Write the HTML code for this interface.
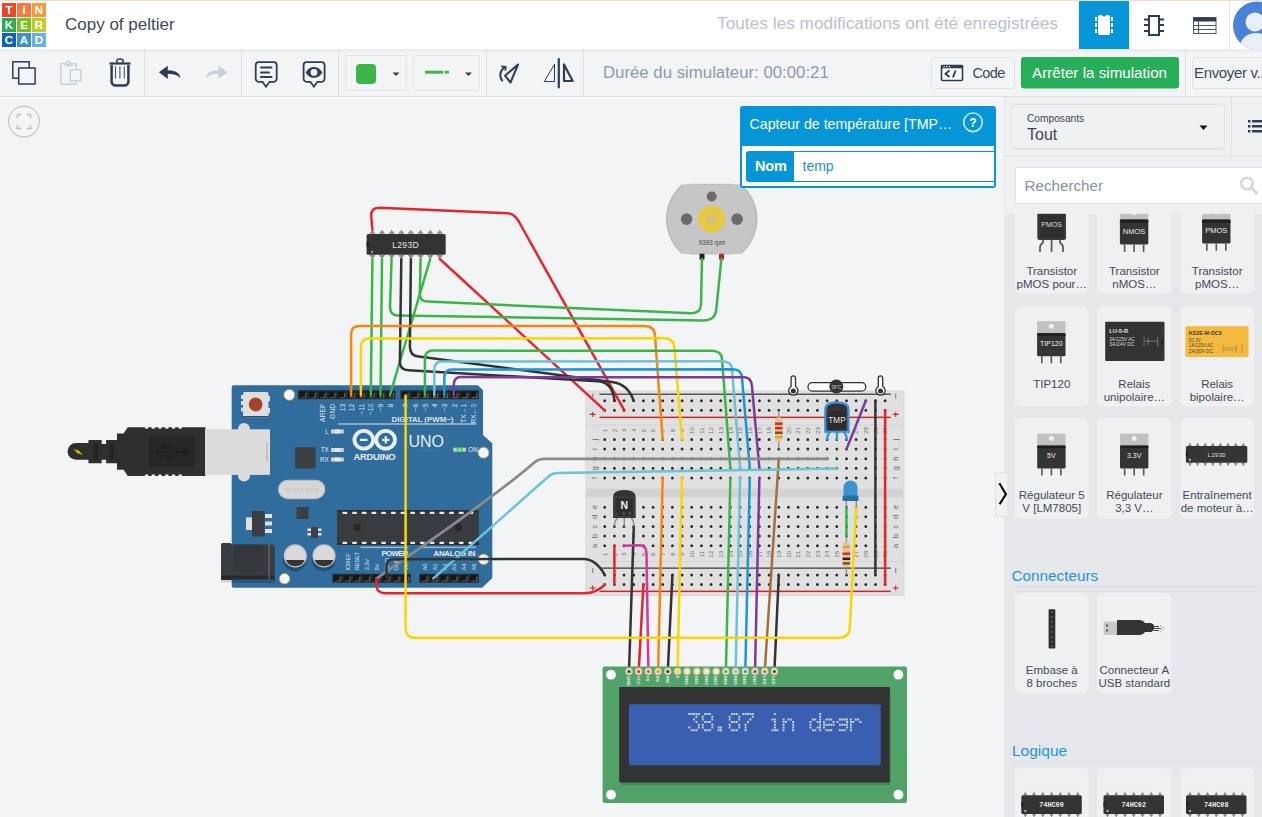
<!DOCTYPE html>
<html><head><meta charset="utf-8">
<style>
*{box-sizing:border-box;margin:0;padding:0}
html,body{width:1262px;height:817px;overflow:hidden;background:#f3f4f6;font-family:"Liberation Sans",sans-serif;position:relative}
.abs{position:absolute}
#hdr{left:0;top:0;width:1262px;height:49px;background:#fff;border-top:1px solid #f3dccd}
#tb{left:0;top:49px;width:1262px;height:48px;background:#f3f4f6;border-bottom:1px solid #dde1e6}
.sep{position:absolute;top:49px;width:1px;height:47px;background:#dde1e6}
.t{position:absolute;white-space:nowrap;line-height:1}
#side{left:1004px;top:97px;width:258px;height:720px;background:#e6e7ea}
.card{position:absolute;width:74px;height:81px;background:#f1f1f3;border-radius:6px}
.cl{position:absolute;left:0;width:74px;text-align:center;font-size:11.5px;line-height:13px;color:#434a56}
</style></head>
<body>
<!-- HEADER -->
<div id="hdr" class="abs"></div>
<svg class="abs" style="left:0;top:0" width="1262" height="97">
  <g font-family="Liberation Sans" font-weight="bold" font-size="11.5" fill="#fff" text-anchor="middle">
    <rect x="2" y="3" width="14" height="14" fill="#e8472a"/><text x="9" y="14.3">T</text>
    <rect x="17" y="3" width="14" height="14" fill="#f47b3d"/><text x="24" y="14.3">I</text>
    <rect x="32" y="3" width="14" height="14" fill="#f89a3c"/><text x="39" y="14.3">N</text>
    <rect x="2" y="18" width="14" height="14" fill="#2eaa55"/><text x="9" y="29.3">K</text>
    <rect x="17" y="18" width="14" height="14" fill="#7dc11f"/><text x="24" y="29.3">E</text>
    <rect x="32" y="18" width="14" height="14" fill="#c1cc2a"/><text x="39" y="29.3">R</text>
    <rect x="2" y="33" width="14" height="14" fill="#1065b3"/><text x="9" y="44.3">C</text>
    <rect x="17" y="33" width="14" height="14" fill="#3f8fca"/><text x="24" y="44.3">A</text>
    <rect x="32" y="33" width="14" height="14" fill="#67b2dd"/><text x="39" y="44.3">D</text>
  </g>
  <!-- active tab -->
  <rect x="1079" y="1" width="50" height="48" fill="#0696d7"/>
  <g fill="#fff">
    <rect x="1098" y="15" width="12" height="20" rx="1.5"/>
    <rect x="1095" y="17" width="2" height="4"/><rect x="1095" y="23" width="2" height="4"/><rect x="1095" y="29" width="2" height="4"/>
    <rect x="1111" y="17" width="2" height="4"/><rect x="1111" y="23" width="2" height="4"/><rect x="1111" y="29" width="2" height="4"/>
  </g>
  <path d="M1102 15 h4 a2 1.6 0 0 1 -4 0z" fill="#0696d7"/>
  <!-- schematic chip icon -->
  <g stroke="#2c3e55" fill="none" stroke-width="2">
    <rect x="1149" y="16" width="10" height="19"/>
    <path d="M1144 19.5h5M1144 25h5M1144 31h5M1159 19.5h5M1159 25h5M1159 31h5"/>
  </g>
  <!-- table icon -->
  <g>
    <rect x="1193.5" y="17.5" width="22.5" height="16" fill="#fff" stroke="#4b5a6c" stroke-width="1"/>
    <rect x="1193.5" y="17.5" width="22.5" height="4" fill="#2c3e55"/>
    <path d="M1194 25.5h22M1194 29.5h22M1198.5 21v12" stroke="#4b5a6c" stroke-width="1.2"/>
  </g>
  <rect x="1229" y="1" width="1" height="48" fill="#e3e6ea"/>
  <!-- avatar -->
  <clipPath id="avc"><circle cx="1257" cy="25.5" r="24"/></clipPath>
  <circle cx="1257" cy="25.5" r="24" fill="#4a82d6"/>
  <g clip-path="url(#avc)" fill="#e8eefa">
    <circle cx="1255" cy="22" r="9.5"/>
    <ellipse cx="1256" cy="47" rx="16" ry="14"/>
  </g>
</svg>
<div class="t" style="left:65px;top:16px;font-size:17px;color:#3c4a5c">Copy of peltier</div>
<div class="t" style="left:717px;top:15px;font-size:17.3px;color:#b7c2cf">Toutes les modifications ont été enregistrées</div>

<!-- TOOLBAR -->
<div id="tb" class="abs"></div>
<div class="abs" style="left:0;top:49px;width:1262px;height:4px;background:linear-gradient(#e8eaed,#f3f4f6)"></div>
<div class="abs" style="left:0;top:97px;width:1004px;height:2px;background:#fafafa"></div>
<div class="sep" style="left:144px"></div>
<div class="sep" style="left:241px"></div>
<div class="sep" style="left:338px"></div>
<div class="sep" style="left:486px"></div>
<div class="sep" style="left:583px"></div>
<div class="sep" style="left:1185px"></div>


<svg class="abs" style="left:0;top:49px" width="1262" height="48" viewBox="0 49 1262 48">
  <g fill="none" stroke="#2c3e55" stroke-width="1.5">
    <rect x="12.8" y="61.8" width="16.4" height="16.4"/>
    <rect x="18.7" y="68" width="16.4" height="16" fill="#f3f4f6"/>
  </g>
  <g fill="none" stroke="#c6d0da" stroke-width="1.4">
    <rect x="60.8" y="63.8" width="15.4" height="20.4"/>
    <path d="M64.5 65.5h8" stroke-width="1.8"/>
    <circle cx="68.4" cy="63" r="1.8" fill="#f3f4f6"/>
    <rect x="70.3" y="69.7" width="10.6" height="11.2" fill="#f3f4f6"/>
  </g>
  <g fill="none" stroke="#2c3e55">
    <path d="M109.5 63.5h21" stroke-width="2.2"/>
    <path d="M117 62.5v-1.5a2 2 0 0 1 2-2h2a2 2 0 0 1 2 2v1.5" stroke-width="1.6"/>
    <path d="M111.6 65v16.5a4 4 0 0 0 4 4h8.8a4 4 0 0 0 4-4v-16.5" stroke-width="2.5"/>
    <path d="M115.5 66.5v12M119.9 66.5v12M124.3 66.5v12" stroke-width="1.1" stroke="#44556b"/>
  </g>
  <path d="M158.9 72.3L167.8 65.8V70.3C173 70.4 177 71.5 179.2 74.5 180 76 180.2 77 180 78.2 178.5 75.5 175.5 74 167.8 73.9V78.9Z" fill="#2c3e55"/>
  <path d="M227.4 72.3L218.5 65.8V70.3C213.3 70.4 209.3 71.5 207.1 74.5 206.3 76 206.1 77 206.3 78.2 207.8 75.5 210.8 74 218.5 73.9V78.9Z" fill="#c5cfda"/>
  <g fill="none" stroke="#2c3e55" stroke-width="1.8">
    <path d="M258.7 62.2h15a3 3 0 0 1 3 3v13.6a3 3 0 0 1 -3 3h-4.2l-3.5 5-3.5-5h-3.8a3 3 0 0 1 -3-3v-13.6a3 3 0 0 1 3-3z"/>
    <path d="M261 67.5h10.5M261 72.4h8M261 77.1h10.5" stroke-width="2" stroke-linecap="round"/>
    <path d="M306.6 62.2h15a3 3 0 0 1 3 3v13.6a3 3 0 0 1 -3 3h-4.2l-3.5 5-3.5-5h-3.8a3 3 0 0 1 -3-3v-13.6a3 3 0 0 1 3-3z"/>
  </g>
  <path d="M305.6 72.4C308.5 68 311.5 67 314 67S319.5 68 322.4 72.4C319.5 76.8 316.5 77.8 314 77.8S308.5 76.8 305.6 72.4Z" fill="#2c3e55"/>
  <circle cx="314" cy="72.4" r="3.4" fill="#f3f4f6"/>
  <!-- color picker -->
  <rect x="345.5" y="55.5" width="61" height="35" rx="3" fill="#f3f4f6" stroke="#dfe3e8"/>
  <rect x="356" y="64" width="20" height="20" rx="4" fill="#3cb648"/>
  <path d="M392.5 72.5h7l-3.5 3.5z" fill="#2c3e55"/>
  <rect x="413.5" y="55.5" width="66" height="35" rx="3" fill="#f3f4f6" stroke="#dfe3e8"/>
  <rect x="425" y="70.7" width="18" height="3" fill="#3cb648"/>
  <rect x="444.5" y="70.9" width="4.5" height="2.6" fill="#3cb648"/>
  <path d="M465 72.5h7l-3.5 3.5z" fill="#2c3e55"/>
  <!-- rotate -->
  <g fill="none" stroke="#2c3e55" stroke-width="2" stroke-linejoin="round">
    <path d="M518 64.5L505 75.7L510.5 82.5Z"/>
    <path d="M502.2 80.6C499.5 77.5 499 71.5 504.5 67.3" stroke-linecap="round"/>
    <path d="M501.2 66.4L505.7 66.8L505.3 70.6" stroke-width="1.8"/>
  </g>
  <!-- flip -->
  <path d="M558.8 59v28.5" stroke="#2c3e55" stroke-width="2.2" stroke-linecap="round"/>
  <path d="M554.5 64.2V81.5H544.3Z" fill="none" stroke="#2c3e55" stroke-width="1" stroke-linejoin="round"/>
  <path d="M564 64.5V81H572.7Z" fill="none" stroke="#2c3e55" stroke-width="2.2" stroke-linejoin="round"/>
  <!-- code button -->
  <rect x="931.5" y="57.5" width="83" height="31" rx="3" fill="#f3f4f6" stroke="#dde1e6"/>
  <rect x="941.5" y="65.5" width="21" height="15" rx="1" fill="#fff" stroke="#2c3e55" stroke-width="1.6"/>
  <rect x="941" y="65" width="22" height="3.3" fill="#2c3e55"/>
  <g fill="#fff"><rect x="943.5" y="66" width="1.2" height="1.2"/><rect x="946.2" y="66" width="1.2" height="1.2"/><rect x="948.9" y="66" width="1.2" height="1.2"/></g>
  <path d="M949.5 70.5l-4 3.3 4 3.3M955.7 70.5l-2.8 6.8" fill="none" stroke="#2c3e55" stroke-width="1.9"/>
  <rect x="1021" y="57" width="158" height="31.5" rx="3" fill="#27ae58"/>
  <rect x="1192.5" y="57.5" width="80" height="31" rx="3" fill="#f3f4f6" stroke="#dde1e6"/>
</svg>
<div class="t" style="left:603px;top:64.8px;font-size:16.8px;color:#8d9bad">Durée du simulateur: 00:00:21</div>
<div class="t" style="left:972.5px;top:66px;font-size:14.5px;letter-spacing:-0.6px;color:#3c4a5c">Code</div>
<div class="t" style="left:1032px;top:65px;font-size:15.2px;color:#fff">Arrêter la simulation</div>
<div class="t" style="left:1194px;top:65px;font-size:15px;letter-spacing:-0.35px;color:#3c4a5c">Envoyer v...</div>


<!--CANVAS_START-->
<svg class="abs" style="left:0;top:97px" width="1004" height="720" viewBox="0 97 1004 720">
<circle cx="24" cy="121.5" r="15.5" fill="none" stroke="#b5bcc5" stroke-width="1"/>
<path d="M17.5 118v-3.5h3.5M27 114.5h3.5v3.5M30.5 125v3.5h-3.5M21 128.5h-3.5v-3.5" fill="none" stroke="#b5bcc5" stroke-width="1.4"/>
<g>
<path d="M89 443.1H76a8.4 8.35 0 0 0 0 16.7H89z" fill="#2f2f2f"/>
<path d="M74.3 449.4L78.6 451.4L77.7 449.9L81.9 454.5L77.3 452.3L78.1 453.6Z" fill="#f5d000" stroke="#f5d000" stroke-width="0.5" stroke-linejoin="round"/>
<path d="M88.5 440H101.7V443.9H106.1V440H118V463.3H106.1V459.8H101.7V463.3H88.5Z" fill="#2f2f2f"/>
<ellipse cx="95.8" cy="451.6" rx="2.6" ry="8.8" fill="#242424"/>
<ellipse cx="111.7" cy="451.6" rx="2.6" ry="8.8" fill="#242424"/>
<path d="M117 433.5H123.6L127.8 427.2H205.5V476H127.8L123.6 469.8H117Z" fill="#2f2f2f"/>
<g fill="#f3f4f6">
<rect x="145.0" y="427" width="3.2" height="1.6"/><rect x="145.0" y="474.5" width="3.2" height="1.6"/>
<rect x="151.7" y="427" width="3.2" height="1.6"/><rect x="151.7" y="474.5" width="3.2" height="1.6"/>
<rect x="158.4" y="427" width="3.2" height="1.6"/><rect x="158.4" y="474.5" width="3.2" height="1.6"/>
<rect x="165.2" y="427" width="3.2" height="1.6"/><rect x="165.2" y="474.5" width="3.2" height="1.6"/>
<rect x="171.9" y="427" width="3.2" height="1.6"/><rect x="171.9" y="474.5" width="3.2" height="1.6"/>
<rect x="178.6" y="427" width="3.2" height="1.6"/><rect x="178.6" y="474.5" width="3.2" height="1.6"/>
</g>
<rect x="149" y="437" width="45.7" height="29.7" fill="#262626"/>
<g fill="#1e1e1e" stroke="#1e1e1e">
<path d="M156.5 451.8H185M175.5 451.8Q171 446 166 445.9M178.8 451.8Q174.5 457 169.5 457" stroke-width="0.9" fill="none"/>
<path d="M154.3 451.8l3.6-2v4z" stroke="none"/>
<circle cx="185.6" cy="451.8" r="2.8" stroke="none"/>
<rect x="161" y="443.9" width="4.7" height="3.9" stroke="none"/>
<circle cx="168.2" cy="457" r="1.9" stroke="none"/>
</g>
<rect x="205" y="429.3" width="65" height="45.6" fill="#dcdcdc"/>
<rect x="205" y="429.3" width="2" height="45.6" fill="#cfcfcf"/>
<rect x="266.5" y="442" width="0.8" height="19" fill="#999"/>
</g>
<path d="M233.7 385.2H478L483 390.3V435L492.3 443.6V578L482.2 587.7H233.7a2 2 0 0 1 -2 -2V387.2a2 2 0 0 1 2 -2z" fill="#306c9c"/>
<circle cx="244" cy="429" r="6" fill="#dcdcdc"/><circle cx="244" cy="475.5" r="6" fill="#dcdcdc"/>
<rect x="205" y="429.3" width="65" height="45.6" fill="#dcdcdc"/><rect x="266.5" y="442" width="0.8" height="19" fill="#999"/>
<rect x="241" y="395" width="3" height="4" fill="#dcdcdc"/><rect x="241" y="401" width="3" height="4" fill="#dcdcdc"/><rect x="241" y="407.5" width="3" height="4" fill="#dcdcdc"/>
<rect x="267" y="396" width="3" height="5" fill="#dcdcdc"/><rect x="267" y="408" width="3" height="5" fill="#dcdcdc"/>
<rect x="243" y="392" width="25.5" height="25.5" rx="1.5" fill="#dedede"/><rect x="243" y="416" width="25.5" height="1.5" fill="#234f74"/>
<circle cx="255.8" cy="405" r="6.7" fill="#234f74" opacity="0.5"/><circle cx="255.6" cy="404.3" r="6.7" fill="#a8432a"/>
<circle cx="289.3" cy="394.9" r="5.6" fill="#f3f4f6" stroke="#9a8a4e" stroke-width="0.9"/>
<circle cx="483.5" cy="452.7" r="5.6" fill="#f3f4f6" stroke="#9a8a4e" stroke-width="0.9"/>
<circle cx="284.5" cy="578.7" r="5.4" fill="#f3f4f6" stroke="#9a8a4e" stroke-width="0.9"/>
<circle cx="483.6" cy="559.3" r="5.4" fill="#f3f4f6" stroke="#9a8a4e" stroke-width="0.9"/>
<rect x="298" y="390.2" width="97.4" height="9" fill="#2b2b2b"/><rect x="299.3" y="391.5" width="7.1" height="6.4" fill="#161616"/><path d="M299.8 397.8h6.5v-5.6l-1.3 1.3v3.4000000000000004h-3.5z" fill="#5e5e5e"/><rect x="309.0" y="391.5" width="7.1" height="6.4" fill="#161616"/><path d="M309.5 397.8h6.5v-5.6l-1.3 1.3v3.4000000000000004h-3.5z" fill="#5e5e5e"/><rect x="318.8" y="391.5" width="7.1" height="6.4" fill="#161616"/><path d="M319.3 397.8h6.5v-5.6l-1.3 1.3v3.4000000000000004h-3.5z" fill="#5e5e5e"/><rect x="328.5" y="391.5" width="7.1" height="6.4" fill="#161616"/><path d="M329.0 397.8h6.5v-5.6l-1.3 1.3v3.4000000000000004h-3.5z" fill="#5e5e5e"/><rect x="338.3" y="391.5" width="7.1" height="6.4" fill="#161616"/><path d="M338.8 397.8h6.5v-5.6l-1.3 1.3v3.4000000000000004h-3.5z" fill="#5e5e5e"/><rect x="348.0" y="391.5" width="7.1" height="6.4" fill="#161616"/><path d="M348.5 397.8h6.5v-5.6l-1.3 1.3v3.4000000000000004h-3.5z" fill="#5e5e5e"/><rect x="357.7" y="391.5" width="7.1" height="6.4" fill="#161616"/><path d="M358.2 397.8h6.5v-5.6l-1.3 1.3v3.4000000000000004h-3.5z" fill="#5e5e5e"/><rect x="367.5" y="391.5" width="7.1" height="6.4" fill="#161616"/><path d="M368.0 397.8h6.5v-5.6l-1.3 1.3v3.4000000000000004h-3.5z" fill="#5e5e5e"/><rect x="377.2" y="391.5" width="7.1" height="6.4" fill="#161616"/><path d="M377.7 397.8h6.5v-5.6l-1.3 1.3v3.4000000000000004h-3.5z" fill="#5e5e5e"/><rect x="387.0" y="391.5" width="7.1" height="6.4" fill="#161616"/><path d="M387.5 397.8h6.5v-5.6l-1.3 1.3v3.4000000000000004h-3.5z" fill="#5e5e5e"/>
<rect x="400.4" y="390.3" width="78.5" height="9" fill="#2b2b2b"/><rect x="401.7" y="391.6" width="7.2" height="6.4" fill="#161616"/><path d="M402.2 397.90000000000003h6.6v-5.6l-1.3 1.3v3.4000000000000004h-3.6z" fill="#5e5e5e"/><rect x="411.5" y="391.6" width="7.2" height="6.4" fill="#161616"/><path d="M412.0 397.90000000000003h6.6v-5.6l-1.3 1.3v3.4000000000000004h-3.6z" fill="#5e5e5e"/><rect x="421.3" y="391.6" width="7.2" height="6.4" fill="#161616"/><path d="M421.8 397.90000000000003h6.6v-5.6l-1.3 1.3v3.4000000000000004h-3.6z" fill="#5e5e5e"/><rect x="431.1" y="391.6" width="7.2" height="6.4" fill="#161616"/><path d="M431.6 397.90000000000003h6.6v-5.6l-1.3 1.3v3.4000000000000004h-3.6z" fill="#5e5e5e"/><rect x="440.9" y="391.6" width="7.2" height="6.4" fill="#161616"/><path d="M441.4 397.90000000000003h6.6v-5.6l-1.3 1.3v3.4000000000000004h-3.6z" fill="#5e5e5e"/><rect x="450.8" y="391.6" width="7.2" height="6.4" fill="#161616"/><path d="M451.2 397.90000000000003h6.6v-5.6l-1.3 1.3v3.4000000000000004h-3.6z" fill="#5e5e5e"/><rect x="460.6" y="391.6" width="7.2" height="6.4" fill="#161616"/><path d="M461.1 397.90000000000003h6.6v-5.6l-1.3 1.3v3.4000000000000004h-3.6z" fill="#5e5e5e"/><rect x="470.4" y="391.6" width="7.2" height="6.4" fill="#161616"/><path d="M470.9 397.90000000000003h6.6v-5.6l-1.3 1.3v3.4000000000000004h-3.6z" fill="#5e5e5e"/>
<rect x="332.4" y="573.8" width="78.4" height="9" fill="#2b2b2b"/><rect x="333.7" y="575.0999999999999" width="7.2" height="6.4" fill="#161616"/><path d="M334.2 581.4h6.6v-5.6l-1.3 1.3v3.4000000000000004h-3.6z" fill="#5e5e5e"/><rect x="343.5" y="575.0999999999999" width="7.2" height="6.4" fill="#161616"/><path d="M344.0 581.4h6.6v-5.6l-1.3 1.3v3.4000000000000004h-3.6z" fill="#5e5e5e"/><rect x="353.3" y="575.0999999999999" width="7.2" height="6.4" fill="#161616"/><path d="M353.8 581.4h6.6v-5.6l-1.3 1.3v3.4000000000000004h-3.6z" fill="#5e5e5e"/><rect x="363.1" y="575.0999999999999" width="7.2" height="6.4" fill="#161616"/><path d="M363.6 581.4h6.6v-5.6l-1.3 1.3v3.4000000000000004h-3.6z" fill="#5e5e5e"/><rect x="372.9" y="575.0999999999999" width="7.2" height="6.4" fill="#161616"/><path d="M373.4 581.4h6.6v-5.6l-1.3 1.3v3.4000000000000004h-3.6z" fill="#5e5e5e"/><rect x="382.7" y="575.0999999999999" width="7.2" height="6.4" fill="#161616"/><path d="M383.2 581.4h6.6v-5.6l-1.3 1.3v3.4000000000000004h-3.6z" fill="#5e5e5e"/><rect x="392.5" y="575.0999999999999" width="7.2" height="6.4" fill="#161616"/><path d="M393.0 581.4h6.6v-5.6l-1.3 1.3v3.4000000000000004h-3.6z" fill="#5e5e5e"/><rect x="402.3" y="575.0999999999999" width="7.2" height="6.4" fill="#161616"/><path d="M402.8 581.4h6.6v-5.6l-1.3 1.3v3.4000000000000004h-3.6z" fill="#5e5e5e"/>
<rect x="419.3" y="573.8" width="59.5" height="9" fill="#2b2b2b"/><rect x="420.6" y="575.0999999999999" width="7.3" height="6.4" fill="#161616"/><path d="M421.1 581.4h6.7v-5.6l-1.3 1.3v3.4000000000000004h-3.7z" fill="#5e5e5e"/><rect x="430.5" y="575.0999999999999" width="7.3" height="6.4" fill="#161616"/><path d="M431.0 581.4h6.7v-5.6l-1.3 1.3v3.4000000000000004h-3.7z" fill="#5e5e5e"/><rect x="440.4" y="575.0999999999999" width="7.3" height="6.4" fill="#161616"/><path d="M440.9 581.4h6.7v-5.6l-1.3 1.3v3.4000000000000004h-3.7z" fill="#5e5e5e"/><rect x="450.4" y="575.0999999999999" width="7.3" height="6.4" fill="#161616"/><path d="M450.9 581.4h6.7v-5.6l-1.3 1.3v3.4000000000000004h-3.7z" fill="#5e5e5e"/><rect x="460.3" y="575.0999999999999" width="7.3" height="6.4" fill="#161616"/><path d="M460.8 581.4h6.7v-5.6l-1.3 1.3v3.4000000000000004h-3.7z" fill="#5e5e5e"/><rect x="470.2" y="575.0999999999999" width="7.3" height="6.4" fill="#161616"/><path d="M470.7 581.4h6.7v-5.6l-1.3 1.3v3.4000000000000004h-3.7z" fill="#5e5e5e"/>
<g font-family="Liberation Sans" font-size="6.8" fill="#d9e4ee">
<text transform="translate(325.3,403.8) rotate(-90)" text-anchor="end">AREF</text>
<text transform="translate(334.8,403.8) rotate(-90)" text-anchor="end">GND</text>
<text transform="translate(344.6,403.8) rotate(-90)" text-anchor="end">13</text>
<text transform="translate(354.1,403.8) rotate(-90)" text-anchor="end">12</text>
<text transform="translate(363.6,403.8) rotate(-90)" text-anchor="end">~11</text>
<text transform="translate(373.3,403.8) rotate(-90)" text-anchor="end">~10</text>
<text transform="translate(382.8,403.8) rotate(-90)" text-anchor="end">~9</text>
<text transform="translate(392.6,403.8) rotate(-90)" text-anchor="end">8</text>
<text transform="translate(408.1,403.8) rotate(-90)" text-anchor="end">7</text>
<text transform="translate(417.9,403.8) rotate(-90)" text-anchor="end">~6</text>
<text transform="translate(427.5,403.8) rotate(-90)" text-anchor="end">~5</text>
<text transform="translate(437.0,403.8) rotate(-90)" text-anchor="end">4</text>
<text transform="translate(446.8,403.8) rotate(-90)" text-anchor="end">~3</text>
<text transform="translate(456.6,403.8) rotate(-90)" text-anchor="end">2</text>
<text transform="translate(466.3,403.8) rotate(-90)" text-anchor="end">TX→1</text>
<text transform="translate(475.9,403.8) rotate(-90)" text-anchor="end">RX←0</text>
</g>
<text x="391.5" y="421.8" font-family="Liberation Sans" font-size="8" font-weight="bold" fill="#d9e4ee" textLength="62">DIGITAL (PWM~)</text>
<rect x="338" y="423.2" width="138" height="1.6" fill="#9db8cf"/>
<g fill="none" stroke="#e8eef4" stroke-width="3.8"><ellipse cx="363.8" cy="439.8" rx="9.4" ry="8.9"/><ellipse cx="385.6" cy="439.8" rx="9.4" ry="8.9"/></g>
<path d="M360 439.8h7.5M382 439.8h7.5M385.75 436v7.6" stroke="#e8eef4" stroke-width="2.2"/>
<text x="353.6" y="459.8" font-family="Liberation Sans" font-size="9.3" font-weight="bold" fill="#e8eef4" textLength="42">ARDUINO</text>
<text x="408.5" y="446.8" font-family="Liberation Sans" font-size="17" fill="#e8eef4" textLength="35.5" lengthAdjust="spacingAndGlyphs">UNO</text>
<rect x="406" y="430" width="42" height="20.5" rx="10" fill="none" stroke="#5e8fb8" stroke-width="0.6" stroke-dasharray="1.5 1.5"/>
<g font-family="Liberation Sans" font-size="6.3" fill="#e8eef4" text-anchor="end"><text x="328.8" y="433.8">L</text><text x="328.8" y="452.3">TX</text><text x="328.8" y="461.8">RX</text></g>
<text x="468.3" y="451.9" font-family="Liberation Sans" font-size="6.3" fill="#e8eef4">ON</text>
<rect x="331" y="429.5" width="12.8" height="4" fill="#d2d2d2"/><rect x="334.5" y="429.5" width="5.5" height="4" fill="#e6e6e6"/>
<rect x="331" y="448" width="12.8" height="4" fill="#d2d2d2"/><rect x="334.5" y="448" width="5.5" height="4" fill="#e6e6e6"/>
<rect x="331" y="457.5" width="12.8" height="4" fill="#d2d2d2"/><rect x="334.5" y="457.5" width="5.5" height="4" fill="#e6e6e6"/>
<rect x="453.3" y="447.7" width="12.7" height="4" fill="#c7c7c7"/><rect x="456.5" y="447.7" width="6" height="4" fill="#3ddc4a"/><circle cx="459.5" cy="449.7" r="1" fill="#d8ffd8"/>
<rect x="295.2" y="447.2" width="20.4" height="21.2" rx="1" fill="#3b3e42"/>
<rect x="278.6" y="480.3" width="46.2" height="18.3" rx="9.1" fill="#d6d6d6" stroke="#bdbdbd" stroke-width="1.2"/>
<text x="301.7" y="492.3" font-family="Liberation Sans" font-size="6" fill="#c4c4c4" text-anchor="middle">SPX1A 0006</text>
<rect x="296.6" y="507" width="12" height="12" fill="#3b3e42"/>
<rect x="246" y="517.4" width="6" height="12.6" fill="#e0e0e0"/><rect x="252" y="511" width="12.6" height="25.5" fill="#3b3e42"/>
<rect x="265" y="514" width="7" height="4" fill="#e0e0e0"/>
<rect x="265" y="521.5" width="7" height="4" fill="#e0e0e0"/>
<rect x="265" y="529" width="7" height="4" fill="#e0e0e0"/>
<rect x="311" y="527" width="7" height="11" fill="#3b3e42"/><g fill="#e0e0e0"><rect x="307.5" y="528.5" width="3.5" height="2.5"/><rect x="307.5" y="533" width="3.5" height="2.5"/><rect x="318" y="528.5" width="3.5" height="2.5"/><rect x="318" y="533" width="3.5" height="2.5"/></g>
<rect x="231" y="545" width="44" height="38" rx="2" fill="#24496a" opacity="0.6"/>
<rect x="221" y="542.9" width="10.5" height="37" rx="1.5" fill="#3a3d40"/><rect x="221" y="575.5" width="10.5" height="4" fill="#272727"/><rect x="221" y="580" width="10.5" height="2.5" fill="#cfcfcf"/>
<path d="M231 544.5h41a2.5 2.5 0 0 1 2.5 2.5v30.5H231z" fill="#3a3d40"/><path d="M234 544.5h24a6 6 0 0 1 6 6V566a6 6 0 0 1 -6 6H240a6 6 0 0 1 -6-6z" fill="#35383b"/><rect x="231" y="575.5" width="43.5" height="4" fill="#282a2c"/>
<rect x="268.7" y="544.5" width="0.8" height="35" fill="#888"/>
<circle cx="294.8" cy="559.5" r="11.8" fill="#244d73"/>
<circle cx="295.3" cy="555.9" r="10.9" fill="#dadada" stroke="#c4c4c4" stroke-width="1.4"/>
<path d="M285.90000000000003 559.9A10.2 10.2 0 0 0 304.7 559.9z" fill="#333"/>
<circle cx="323.5" cy="559.5" r="11.8" fill="#244d73"/>
<circle cx="324" cy="555.9" r="10.9" fill="#dadada" stroke="#c4c4c4" stroke-width="1.4"/>
<path d="M314.6 559.9A10.2 10.2 0 0 0 333.4 559.9z" fill="#333"/>
<rect x="337" y="510.1" width="141.8" height="34.8" rx="1" fill="#393c3f"/>
<rect x="337" y="510.1" width="141.8" height="2.2" fill="#2d2f31"/><rect x="337" y="542.7" width="141.8" height="2.2" fill="#2d2f31"/>
<rect x="342.5" y="511.8" width="4.6" height="2.2" rx="0.5" fill="#e8e8e8"/><rect x="342.5" y="541.7" width="4.6" height="2.2" rx="0.5" fill="#e8e8e8"/>
<rect x="352.2" y="511.8" width="4.6" height="2.2" rx="0.5" fill="#e8e8e8"/><rect x="352.2" y="541.7" width="4.6" height="2.2" rx="0.5" fill="#e8e8e8"/>
<rect x="361.9" y="511.8" width="4.6" height="2.2" rx="0.5" fill="#e8e8e8"/><rect x="361.9" y="541.7" width="4.6" height="2.2" rx="0.5" fill="#e8e8e8"/>
<rect x="371.6" y="511.8" width="4.6" height="2.2" rx="0.5" fill="#e8e8e8"/><rect x="371.6" y="541.7" width="4.6" height="2.2" rx="0.5" fill="#e8e8e8"/>
<rect x="381.3" y="511.8" width="4.6" height="2.2" rx="0.5" fill="#e8e8e8"/><rect x="381.3" y="541.7" width="4.6" height="2.2" rx="0.5" fill="#e8e8e8"/>
<rect x="391.0" y="511.8" width="4.6" height="2.2" rx="0.5" fill="#e8e8e8"/><rect x="391.0" y="541.7" width="4.6" height="2.2" rx="0.5" fill="#e8e8e8"/>
<rect x="400.7" y="511.8" width="4.6" height="2.2" rx="0.5" fill="#e8e8e8"/><rect x="400.7" y="541.7" width="4.6" height="2.2" rx="0.5" fill="#e8e8e8"/>
<rect x="410.4" y="511.8" width="4.6" height="2.2" rx="0.5" fill="#e8e8e8"/><rect x="410.4" y="541.7" width="4.6" height="2.2" rx="0.5" fill="#e8e8e8"/>
<rect x="420.1" y="511.8" width="4.6" height="2.2" rx="0.5" fill="#e8e8e8"/><rect x="420.1" y="541.7" width="4.6" height="2.2" rx="0.5" fill="#e8e8e8"/>
<rect x="429.8" y="511.8" width="4.6" height="2.2" rx="0.5" fill="#e8e8e8"/><rect x="429.8" y="541.7" width="4.6" height="2.2" rx="0.5" fill="#e8e8e8"/>
<rect x="439.5" y="511.8" width="4.6" height="2.2" rx="0.5" fill="#e8e8e8"/><rect x="439.5" y="541.7" width="4.6" height="2.2" rx="0.5" fill="#e8e8e8"/>
<rect x="449.2" y="511.8" width="4.6" height="2.2" rx="0.5" fill="#e8e8e8"/><rect x="449.2" y="541.7" width="4.6" height="2.2" rx="0.5" fill="#e8e8e8"/>
<rect x="458.9" y="511.8" width="4.6" height="2.2" rx="0.5" fill="#e8e8e8"/><rect x="458.9" y="541.7" width="4.6" height="2.2" rx="0.5" fill="#e8e8e8"/>
<rect x="468.6" y="511.8" width="4.6" height="2.2" rx="0.5" fill="#e8e8e8"/><rect x="468.6" y="541.7" width="4.6" height="2.2" rx="0.5" fill="#e8e8e8"/>
<circle cx="357" cy="527.5" r="3.8" fill="#272829"/><circle cx="458.6" cy="527.5" r="3.8" fill="#272829"/>
<g font-family="Liberation Sans" font-weight="bold" font-size="7.8" fill="#e8eef4"><text x="381.5" y="556.4" textLength="27">POWER</text><text x="433.6" y="556.4" textLength="41.7">ANALOG IN</text></g>
<rect x="360.5" y="546.6" width="48" height="1.5" fill="#9db8cf"/><rect x="419" y="546.6" width="57" height="1.5" fill="#9db8cf"/>
<g font-family="Liberation Sans" font-size="6" fill="#d9e4ee" letter-spacing="-0.25">
<text transform="translate(349.7,570.5) rotate(-90)">IOREF</text>
<text transform="translate(359.4,570.5) rotate(-90)">RESET</text>
<text transform="translate(369.2,570.5) rotate(-90)">3.3V</text>
<text transform="translate(378.9,570.5) rotate(-90)">5V</text>
<text transform="translate(388.9,570.5) rotate(-90)">GND</text>
<text transform="translate(398.4,570.5) rotate(-90)">GND</text>
<text transform="translate(408.0,570.5) rotate(-90)">Vin</text>
<text transform="translate(426.7,570.5) rotate(-90)">A0</text>
<text transform="translate(436.59999999999997,570.5) rotate(-90)">A1</text>
<text transform="translate(446.5,570.5) rotate(-90)">A2</text>
<text transform="translate(456.4,570.5) rotate(-90)">A3</text>
<text transform="translate(466.29999999999995,570.5) rotate(-90)">A4</text>
<text transform="translate(476.2,570.5) rotate(-90)">A5</text>
</g>
<rect x="585.3" y="390.3" width="319.1" height="205.7" fill="#d9d9d9"/>
<rect x="586.3" y="391.3" width="317.1" height="203.7" fill="#e0e0e0"/>
<rect x="586.3" y="424.6" width="317.1" height="0.9" fill="#d3d3d3"/>
<rect x="586.3" y="561.2" width="317.1" height="0.9" fill="#d3d3d3"/>
<rect x="586.3" y="488.8" width="317.1" height="8.2" fill="#d2d2d2"/>
<rect x="599.5" y="393.5" width="291.2" height="1.5" fill="#555"/><rect x="599.5" y="416.6" width="291.2" height="1.5" fill="#c8282a"/>
<rect x="599.5" y="567.4" width="291.2" height="1.5" fill="#555"/><rect x="599.5" y="590.6" width="291.2" height="1.5" fill="#c8282a"/>
<path d="M603.2 400.8a1.5 1.5 0 1 0 3 0a1.5 1.5 0 1 0 -3 0M603.2 410.3a1.5 1.5 0 1 0 3 0a1.5 1.5 0 1 0 -3 0M603.2 439.6a1.5 1.5 0 1 0 3 0a1.5 1.5 0 1 0 -3 0M603.2 449.1a1.5 1.5 0 1 0 3 0a1.5 1.5 0 1 0 -3 0M603.2 458.7a1.5 1.5 0 1 0 3 0a1.5 1.5 0 1 0 -3 0M603.2 468.3a1.5 1.5 0 1 0 3 0a1.5 1.5 0 1 0 -3 0M603.2 477.9a1.5 1.5 0 1 0 3 0a1.5 1.5 0 1 0 -3 0M603.2 507.2a1.5 1.5 0 1 0 3 0a1.5 1.5 0 1 0 -3 0M603.2 516.8a1.5 1.5 0 1 0 3 0a1.5 1.5 0 1 0 -3 0M603.2 526.5a1.5 1.5 0 1 0 3 0a1.5 1.5 0 1 0 -3 0M603.2 536.1a1.5 1.5 0 1 0 3 0a1.5 1.5 0 1 0 -3 0M603.2 545.8a1.5 1.5 0 1 0 3 0a1.5 1.5 0 1 0 -3 0M603.2 574.9a1.5 1.5 0 1 0 3 0a1.5 1.5 0 1 0 -3 0M603.2 584.6a1.5 1.5 0 1 0 3 0a1.5 1.5 0 1 0 -3 0M612.9 400.8a1.5 1.5 0 1 0 3 0a1.5 1.5 0 1 0 -3 0M612.9 410.3a1.5 1.5 0 1 0 3 0a1.5 1.5 0 1 0 -3 0M612.9 439.6a1.5 1.5 0 1 0 3 0a1.5 1.5 0 1 0 -3 0M612.9 449.1a1.5 1.5 0 1 0 3 0a1.5 1.5 0 1 0 -3 0M612.9 458.7a1.5 1.5 0 1 0 3 0a1.5 1.5 0 1 0 -3 0M612.9 468.3a1.5 1.5 0 1 0 3 0a1.5 1.5 0 1 0 -3 0M612.9 477.9a1.5 1.5 0 1 0 3 0a1.5 1.5 0 1 0 -3 0M612.9 507.2a1.5 1.5 0 1 0 3 0a1.5 1.5 0 1 0 -3 0M612.9 516.8a1.5 1.5 0 1 0 3 0a1.5 1.5 0 1 0 -3 0M612.9 526.5a1.5 1.5 0 1 0 3 0a1.5 1.5 0 1 0 -3 0M612.9 536.1a1.5 1.5 0 1 0 3 0a1.5 1.5 0 1 0 -3 0M612.9 545.8a1.5 1.5 0 1 0 3 0a1.5 1.5 0 1 0 -3 0M612.9 574.9a1.5 1.5 0 1 0 3 0a1.5 1.5 0 1 0 -3 0M612.9 584.6a1.5 1.5 0 1 0 3 0a1.5 1.5 0 1 0 -3 0M622.5 400.8a1.5 1.5 0 1 0 3 0a1.5 1.5 0 1 0 -3 0M622.5 410.3a1.5 1.5 0 1 0 3 0a1.5 1.5 0 1 0 -3 0M622.5 439.6a1.5 1.5 0 1 0 3 0a1.5 1.5 0 1 0 -3 0M622.5 449.1a1.5 1.5 0 1 0 3 0a1.5 1.5 0 1 0 -3 0M622.5 458.7a1.5 1.5 0 1 0 3 0a1.5 1.5 0 1 0 -3 0M622.5 468.3a1.5 1.5 0 1 0 3 0a1.5 1.5 0 1 0 -3 0M622.5 477.9a1.5 1.5 0 1 0 3 0a1.5 1.5 0 1 0 -3 0M622.5 507.2a1.5 1.5 0 1 0 3 0a1.5 1.5 0 1 0 -3 0M622.5 516.8a1.5 1.5 0 1 0 3 0a1.5 1.5 0 1 0 -3 0M622.5 526.5a1.5 1.5 0 1 0 3 0a1.5 1.5 0 1 0 -3 0M622.5 536.1a1.5 1.5 0 1 0 3 0a1.5 1.5 0 1 0 -3 0M622.5 545.8a1.5 1.5 0 1 0 3 0a1.5 1.5 0 1 0 -3 0M622.5 574.9a1.5 1.5 0 1 0 3 0a1.5 1.5 0 1 0 -3 0M622.5 584.6a1.5 1.5 0 1 0 3 0a1.5 1.5 0 1 0 -3 0M632.2 400.8a1.5 1.5 0 1 0 3 0a1.5 1.5 0 1 0 -3 0M632.2 410.3a1.5 1.5 0 1 0 3 0a1.5 1.5 0 1 0 -3 0M632.2 439.6a1.5 1.5 0 1 0 3 0a1.5 1.5 0 1 0 -3 0M632.2 449.1a1.5 1.5 0 1 0 3 0a1.5 1.5 0 1 0 -3 0M632.2 458.7a1.5 1.5 0 1 0 3 0a1.5 1.5 0 1 0 -3 0M632.2 468.3a1.5 1.5 0 1 0 3 0a1.5 1.5 0 1 0 -3 0M632.2 477.9a1.5 1.5 0 1 0 3 0a1.5 1.5 0 1 0 -3 0M632.2 507.2a1.5 1.5 0 1 0 3 0a1.5 1.5 0 1 0 -3 0M632.2 516.8a1.5 1.5 0 1 0 3 0a1.5 1.5 0 1 0 -3 0M632.2 526.5a1.5 1.5 0 1 0 3 0a1.5 1.5 0 1 0 -3 0M632.2 536.1a1.5 1.5 0 1 0 3 0a1.5 1.5 0 1 0 -3 0M632.2 545.8a1.5 1.5 0 1 0 3 0a1.5 1.5 0 1 0 -3 0M632.2 574.9a1.5 1.5 0 1 0 3 0a1.5 1.5 0 1 0 -3 0M632.2 584.6a1.5 1.5 0 1 0 3 0a1.5 1.5 0 1 0 -3 0M641.9 400.8a1.5 1.5 0 1 0 3 0a1.5 1.5 0 1 0 -3 0M641.9 410.3a1.5 1.5 0 1 0 3 0a1.5 1.5 0 1 0 -3 0M641.9 439.6a1.5 1.5 0 1 0 3 0a1.5 1.5 0 1 0 -3 0M641.9 449.1a1.5 1.5 0 1 0 3 0a1.5 1.5 0 1 0 -3 0M641.9 458.7a1.5 1.5 0 1 0 3 0a1.5 1.5 0 1 0 -3 0M641.9 468.3a1.5 1.5 0 1 0 3 0a1.5 1.5 0 1 0 -3 0M641.9 477.9a1.5 1.5 0 1 0 3 0a1.5 1.5 0 1 0 -3 0M641.9 507.2a1.5 1.5 0 1 0 3 0a1.5 1.5 0 1 0 -3 0M641.9 516.8a1.5 1.5 0 1 0 3 0a1.5 1.5 0 1 0 -3 0M641.9 526.5a1.5 1.5 0 1 0 3 0a1.5 1.5 0 1 0 -3 0M641.9 536.1a1.5 1.5 0 1 0 3 0a1.5 1.5 0 1 0 -3 0M641.9 545.8a1.5 1.5 0 1 0 3 0a1.5 1.5 0 1 0 -3 0M641.9 574.9a1.5 1.5 0 1 0 3 0a1.5 1.5 0 1 0 -3 0M641.9 584.6a1.5 1.5 0 1 0 3 0a1.5 1.5 0 1 0 -3 0M651.6 400.8a1.5 1.5 0 1 0 3 0a1.5 1.5 0 1 0 -3 0M651.6 410.3a1.5 1.5 0 1 0 3 0a1.5 1.5 0 1 0 -3 0M651.6 439.6a1.5 1.5 0 1 0 3 0a1.5 1.5 0 1 0 -3 0M651.6 449.1a1.5 1.5 0 1 0 3 0a1.5 1.5 0 1 0 -3 0M651.6 458.7a1.5 1.5 0 1 0 3 0a1.5 1.5 0 1 0 -3 0M651.6 468.3a1.5 1.5 0 1 0 3 0a1.5 1.5 0 1 0 -3 0M651.6 477.9a1.5 1.5 0 1 0 3 0a1.5 1.5 0 1 0 -3 0M651.6 507.2a1.5 1.5 0 1 0 3 0a1.5 1.5 0 1 0 -3 0M651.6 516.8a1.5 1.5 0 1 0 3 0a1.5 1.5 0 1 0 -3 0M651.6 526.5a1.5 1.5 0 1 0 3 0a1.5 1.5 0 1 0 -3 0M651.6 536.1a1.5 1.5 0 1 0 3 0a1.5 1.5 0 1 0 -3 0M651.6 545.8a1.5 1.5 0 1 0 3 0a1.5 1.5 0 1 0 -3 0M651.6 574.9a1.5 1.5 0 1 0 3 0a1.5 1.5 0 1 0 -3 0M651.6 584.6a1.5 1.5 0 1 0 3 0a1.5 1.5 0 1 0 -3 0M661.2 400.8a1.5 1.5 0 1 0 3 0a1.5 1.5 0 1 0 -3 0M661.2 410.3a1.5 1.5 0 1 0 3 0a1.5 1.5 0 1 0 -3 0M661.2 439.6a1.5 1.5 0 1 0 3 0a1.5 1.5 0 1 0 -3 0M661.2 449.1a1.5 1.5 0 1 0 3 0a1.5 1.5 0 1 0 -3 0M661.2 458.7a1.5 1.5 0 1 0 3 0a1.5 1.5 0 1 0 -3 0M661.2 468.3a1.5 1.5 0 1 0 3 0a1.5 1.5 0 1 0 -3 0M661.2 477.9a1.5 1.5 0 1 0 3 0a1.5 1.5 0 1 0 -3 0M661.2 507.2a1.5 1.5 0 1 0 3 0a1.5 1.5 0 1 0 -3 0M661.2 516.8a1.5 1.5 0 1 0 3 0a1.5 1.5 0 1 0 -3 0M661.2 526.5a1.5 1.5 0 1 0 3 0a1.5 1.5 0 1 0 -3 0M661.2 536.1a1.5 1.5 0 1 0 3 0a1.5 1.5 0 1 0 -3 0M661.2 545.8a1.5 1.5 0 1 0 3 0a1.5 1.5 0 1 0 -3 0M661.2 574.9a1.5 1.5 0 1 0 3 0a1.5 1.5 0 1 0 -3 0M661.2 584.6a1.5 1.5 0 1 0 3 0a1.5 1.5 0 1 0 -3 0M670.9 400.8a1.5 1.5 0 1 0 3 0a1.5 1.5 0 1 0 -3 0M670.9 410.3a1.5 1.5 0 1 0 3 0a1.5 1.5 0 1 0 -3 0M670.9 439.6a1.5 1.5 0 1 0 3 0a1.5 1.5 0 1 0 -3 0M670.9 449.1a1.5 1.5 0 1 0 3 0a1.5 1.5 0 1 0 -3 0M670.9 458.7a1.5 1.5 0 1 0 3 0a1.5 1.5 0 1 0 -3 0M670.9 468.3a1.5 1.5 0 1 0 3 0a1.5 1.5 0 1 0 -3 0M670.9 477.9a1.5 1.5 0 1 0 3 0a1.5 1.5 0 1 0 -3 0M670.9 507.2a1.5 1.5 0 1 0 3 0a1.5 1.5 0 1 0 -3 0M670.9 516.8a1.5 1.5 0 1 0 3 0a1.5 1.5 0 1 0 -3 0M670.9 526.5a1.5 1.5 0 1 0 3 0a1.5 1.5 0 1 0 -3 0M670.9 536.1a1.5 1.5 0 1 0 3 0a1.5 1.5 0 1 0 -3 0M670.9 545.8a1.5 1.5 0 1 0 3 0a1.5 1.5 0 1 0 -3 0M670.9 574.9a1.5 1.5 0 1 0 3 0a1.5 1.5 0 1 0 -3 0M670.9 584.6a1.5 1.5 0 1 0 3 0a1.5 1.5 0 1 0 -3 0M680.6 400.8a1.5 1.5 0 1 0 3 0a1.5 1.5 0 1 0 -3 0M680.6 410.3a1.5 1.5 0 1 0 3 0a1.5 1.5 0 1 0 -3 0M680.6 439.6a1.5 1.5 0 1 0 3 0a1.5 1.5 0 1 0 -3 0M680.6 449.1a1.5 1.5 0 1 0 3 0a1.5 1.5 0 1 0 -3 0M680.6 458.7a1.5 1.5 0 1 0 3 0a1.5 1.5 0 1 0 -3 0M680.6 468.3a1.5 1.5 0 1 0 3 0a1.5 1.5 0 1 0 -3 0M680.6 477.9a1.5 1.5 0 1 0 3 0a1.5 1.5 0 1 0 -3 0M680.6 507.2a1.5 1.5 0 1 0 3 0a1.5 1.5 0 1 0 -3 0M680.6 516.8a1.5 1.5 0 1 0 3 0a1.5 1.5 0 1 0 -3 0M680.6 526.5a1.5 1.5 0 1 0 3 0a1.5 1.5 0 1 0 -3 0M680.6 536.1a1.5 1.5 0 1 0 3 0a1.5 1.5 0 1 0 -3 0M680.6 545.8a1.5 1.5 0 1 0 3 0a1.5 1.5 0 1 0 -3 0M680.6 574.9a1.5 1.5 0 1 0 3 0a1.5 1.5 0 1 0 -3 0M680.6 584.6a1.5 1.5 0 1 0 3 0a1.5 1.5 0 1 0 -3 0M690.2 400.8a1.5 1.5 0 1 0 3 0a1.5 1.5 0 1 0 -3 0M690.2 410.3a1.5 1.5 0 1 0 3 0a1.5 1.5 0 1 0 -3 0M690.2 439.6a1.5 1.5 0 1 0 3 0a1.5 1.5 0 1 0 -3 0M690.2 449.1a1.5 1.5 0 1 0 3 0a1.5 1.5 0 1 0 -3 0M690.2 458.7a1.5 1.5 0 1 0 3 0a1.5 1.5 0 1 0 -3 0M690.2 468.3a1.5 1.5 0 1 0 3 0a1.5 1.5 0 1 0 -3 0M690.2 477.9a1.5 1.5 0 1 0 3 0a1.5 1.5 0 1 0 -3 0M690.2 507.2a1.5 1.5 0 1 0 3 0a1.5 1.5 0 1 0 -3 0M690.2 516.8a1.5 1.5 0 1 0 3 0a1.5 1.5 0 1 0 -3 0M690.2 526.5a1.5 1.5 0 1 0 3 0a1.5 1.5 0 1 0 -3 0M690.2 536.1a1.5 1.5 0 1 0 3 0a1.5 1.5 0 1 0 -3 0M690.2 545.8a1.5 1.5 0 1 0 3 0a1.5 1.5 0 1 0 -3 0M690.2 574.9a1.5 1.5 0 1 0 3 0a1.5 1.5 0 1 0 -3 0M690.2 584.6a1.5 1.5 0 1 0 3 0a1.5 1.5 0 1 0 -3 0M699.9 400.8a1.5 1.5 0 1 0 3 0a1.5 1.5 0 1 0 -3 0M699.9 410.3a1.5 1.5 0 1 0 3 0a1.5 1.5 0 1 0 -3 0M699.9 439.6a1.5 1.5 0 1 0 3 0a1.5 1.5 0 1 0 -3 0M699.9 449.1a1.5 1.5 0 1 0 3 0a1.5 1.5 0 1 0 -3 0M699.9 458.7a1.5 1.5 0 1 0 3 0a1.5 1.5 0 1 0 -3 0M699.9 468.3a1.5 1.5 0 1 0 3 0a1.5 1.5 0 1 0 -3 0M699.9 477.9a1.5 1.5 0 1 0 3 0a1.5 1.5 0 1 0 -3 0M699.9 507.2a1.5 1.5 0 1 0 3 0a1.5 1.5 0 1 0 -3 0M699.9 516.8a1.5 1.5 0 1 0 3 0a1.5 1.5 0 1 0 -3 0M699.9 526.5a1.5 1.5 0 1 0 3 0a1.5 1.5 0 1 0 -3 0M699.9 536.1a1.5 1.5 0 1 0 3 0a1.5 1.5 0 1 0 -3 0M699.9 545.8a1.5 1.5 0 1 0 3 0a1.5 1.5 0 1 0 -3 0M699.9 574.9a1.5 1.5 0 1 0 3 0a1.5 1.5 0 1 0 -3 0M699.9 584.6a1.5 1.5 0 1 0 3 0a1.5 1.5 0 1 0 -3 0M709.6 400.8a1.5 1.5 0 1 0 3 0a1.5 1.5 0 1 0 -3 0M709.6 410.3a1.5 1.5 0 1 0 3 0a1.5 1.5 0 1 0 -3 0M709.6 439.6a1.5 1.5 0 1 0 3 0a1.5 1.5 0 1 0 -3 0M709.6 449.1a1.5 1.5 0 1 0 3 0a1.5 1.5 0 1 0 -3 0M709.6 458.7a1.5 1.5 0 1 0 3 0a1.5 1.5 0 1 0 -3 0M709.6 468.3a1.5 1.5 0 1 0 3 0a1.5 1.5 0 1 0 -3 0M709.6 477.9a1.5 1.5 0 1 0 3 0a1.5 1.5 0 1 0 -3 0M709.6 507.2a1.5 1.5 0 1 0 3 0a1.5 1.5 0 1 0 -3 0M709.6 516.8a1.5 1.5 0 1 0 3 0a1.5 1.5 0 1 0 -3 0M709.6 526.5a1.5 1.5 0 1 0 3 0a1.5 1.5 0 1 0 -3 0M709.6 536.1a1.5 1.5 0 1 0 3 0a1.5 1.5 0 1 0 -3 0M709.6 545.8a1.5 1.5 0 1 0 3 0a1.5 1.5 0 1 0 -3 0M709.6 574.9a1.5 1.5 0 1 0 3 0a1.5 1.5 0 1 0 -3 0M709.6 584.6a1.5 1.5 0 1 0 3 0a1.5 1.5 0 1 0 -3 0M719.2 400.8a1.5 1.5 0 1 0 3 0a1.5 1.5 0 1 0 -3 0M719.2 410.3a1.5 1.5 0 1 0 3 0a1.5 1.5 0 1 0 -3 0M719.2 439.6a1.5 1.5 0 1 0 3 0a1.5 1.5 0 1 0 -3 0M719.2 449.1a1.5 1.5 0 1 0 3 0a1.5 1.5 0 1 0 -3 0M719.2 458.7a1.5 1.5 0 1 0 3 0a1.5 1.5 0 1 0 -3 0M719.2 468.3a1.5 1.5 0 1 0 3 0a1.5 1.5 0 1 0 -3 0M719.2 477.9a1.5 1.5 0 1 0 3 0a1.5 1.5 0 1 0 -3 0M719.2 507.2a1.5 1.5 0 1 0 3 0a1.5 1.5 0 1 0 -3 0M719.2 516.8a1.5 1.5 0 1 0 3 0a1.5 1.5 0 1 0 -3 0M719.2 526.5a1.5 1.5 0 1 0 3 0a1.5 1.5 0 1 0 -3 0M719.2 536.1a1.5 1.5 0 1 0 3 0a1.5 1.5 0 1 0 -3 0M719.2 545.8a1.5 1.5 0 1 0 3 0a1.5 1.5 0 1 0 -3 0M719.2 574.9a1.5 1.5 0 1 0 3 0a1.5 1.5 0 1 0 -3 0M719.2 584.6a1.5 1.5 0 1 0 3 0a1.5 1.5 0 1 0 -3 0M728.9 400.8a1.5 1.5 0 1 0 3 0a1.5 1.5 0 1 0 -3 0M728.9 410.3a1.5 1.5 0 1 0 3 0a1.5 1.5 0 1 0 -3 0M728.9 439.6a1.5 1.5 0 1 0 3 0a1.5 1.5 0 1 0 -3 0M728.9 449.1a1.5 1.5 0 1 0 3 0a1.5 1.5 0 1 0 -3 0M728.9 458.7a1.5 1.5 0 1 0 3 0a1.5 1.5 0 1 0 -3 0M728.9 468.3a1.5 1.5 0 1 0 3 0a1.5 1.5 0 1 0 -3 0M728.9 477.9a1.5 1.5 0 1 0 3 0a1.5 1.5 0 1 0 -3 0M728.9 507.2a1.5 1.5 0 1 0 3 0a1.5 1.5 0 1 0 -3 0M728.9 516.8a1.5 1.5 0 1 0 3 0a1.5 1.5 0 1 0 -3 0M728.9 526.5a1.5 1.5 0 1 0 3 0a1.5 1.5 0 1 0 -3 0M728.9 536.1a1.5 1.5 0 1 0 3 0a1.5 1.5 0 1 0 -3 0M728.9 545.8a1.5 1.5 0 1 0 3 0a1.5 1.5 0 1 0 -3 0M728.9 574.9a1.5 1.5 0 1 0 3 0a1.5 1.5 0 1 0 -3 0M728.9 584.6a1.5 1.5 0 1 0 3 0a1.5 1.5 0 1 0 -3 0M738.6 400.8a1.5 1.5 0 1 0 3 0a1.5 1.5 0 1 0 -3 0M738.6 410.3a1.5 1.5 0 1 0 3 0a1.5 1.5 0 1 0 -3 0M738.6 439.6a1.5 1.5 0 1 0 3 0a1.5 1.5 0 1 0 -3 0M738.6 449.1a1.5 1.5 0 1 0 3 0a1.5 1.5 0 1 0 -3 0M738.6 458.7a1.5 1.5 0 1 0 3 0a1.5 1.5 0 1 0 -3 0M738.6 468.3a1.5 1.5 0 1 0 3 0a1.5 1.5 0 1 0 -3 0M738.6 477.9a1.5 1.5 0 1 0 3 0a1.5 1.5 0 1 0 -3 0M738.6 507.2a1.5 1.5 0 1 0 3 0a1.5 1.5 0 1 0 -3 0M738.6 516.8a1.5 1.5 0 1 0 3 0a1.5 1.5 0 1 0 -3 0M738.6 526.5a1.5 1.5 0 1 0 3 0a1.5 1.5 0 1 0 -3 0M738.6 536.1a1.5 1.5 0 1 0 3 0a1.5 1.5 0 1 0 -3 0M738.6 545.8a1.5 1.5 0 1 0 3 0a1.5 1.5 0 1 0 -3 0M738.6 574.9a1.5 1.5 0 1 0 3 0a1.5 1.5 0 1 0 -3 0M738.6 584.6a1.5 1.5 0 1 0 3 0a1.5 1.5 0 1 0 -3 0M748.2 400.8a1.5 1.5 0 1 0 3 0a1.5 1.5 0 1 0 -3 0M748.2 410.3a1.5 1.5 0 1 0 3 0a1.5 1.5 0 1 0 -3 0M748.2 439.6a1.5 1.5 0 1 0 3 0a1.5 1.5 0 1 0 -3 0M748.2 449.1a1.5 1.5 0 1 0 3 0a1.5 1.5 0 1 0 -3 0M748.2 458.7a1.5 1.5 0 1 0 3 0a1.5 1.5 0 1 0 -3 0M748.2 468.3a1.5 1.5 0 1 0 3 0a1.5 1.5 0 1 0 -3 0M748.2 477.9a1.5 1.5 0 1 0 3 0a1.5 1.5 0 1 0 -3 0M748.2 507.2a1.5 1.5 0 1 0 3 0a1.5 1.5 0 1 0 -3 0M748.2 516.8a1.5 1.5 0 1 0 3 0a1.5 1.5 0 1 0 -3 0M748.2 526.5a1.5 1.5 0 1 0 3 0a1.5 1.5 0 1 0 -3 0M748.2 536.1a1.5 1.5 0 1 0 3 0a1.5 1.5 0 1 0 -3 0M748.2 545.8a1.5 1.5 0 1 0 3 0a1.5 1.5 0 1 0 -3 0M748.2 574.9a1.5 1.5 0 1 0 3 0a1.5 1.5 0 1 0 -3 0M748.2 584.6a1.5 1.5 0 1 0 3 0a1.5 1.5 0 1 0 -3 0M757.9 400.8a1.5 1.5 0 1 0 3 0a1.5 1.5 0 1 0 -3 0M757.9 410.3a1.5 1.5 0 1 0 3 0a1.5 1.5 0 1 0 -3 0M757.9 439.6a1.5 1.5 0 1 0 3 0a1.5 1.5 0 1 0 -3 0M757.9 449.1a1.5 1.5 0 1 0 3 0a1.5 1.5 0 1 0 -3 0M757.9 458.7a1.5 1.5 0 1 0 3 0a1.5 1.5 0 1 0 -3 0M757.9 468.3a1.5 1.5 0 1 0 3 0a1.5 1.5 0 1 0 -3 0M757.9 477.9a1.5 1.5 0 1 0 3 0a1.5 1.5 0 1 0 -3 0M757.9 507.2a1.5 1.5 0 1 0 3 0a1.5 1.5 0 1 0 -3 0M757.9 516.8a1.5 1.5 0 1 0 3 0a1.5 1.5 0 1 0 -3 0M757.9 526.5a1.5 1.5 0 1 0 3 0a1.5 1.5 0 1 0 -3 0M757.9 536.1a1.5 1.5 0 1 0 3 0a1.5 1.5 0 1 0 -3 0M757.9 545.8a1.5 1.5 0 1 0 3 0a1.5 1.5 0 1 0 -3 0M757.9 574.9a1.5 1.5 0 1 0 3 0a1.5 1.5 0 1 0 -3 0M757.9 584.6a1.5 1.5 0 1 0 3 0a1.5 1.5 0 1 0 -3 0M767.6 400.8a1.5 1.5 0 1 0 3 0a1.5 1.5 0 1 0 -3 0M767.6 410.3a1.5 1.5 0 1 0 3 0a1.5 1.5 0 1 0 -3 0M767.6 439.6a1.5 1.5 0 1 0 3 0a1.5 1.5 0 1 0 -3 0M767.6 449.1a1.5 1.5 0 1 0 3 0a1.5 1.5 0 1 0 -3 0M767.6 458.7a1.5 1.5 0 1 0 3 0a1.5 1.5 0 1 0 -3 0M767.6 468.3a1.5 1.5 0 1 0 3 0a1.5 1.5 0 1 0 -3 0M767.6 477.9a1.5 1.5 0 1 0 3 0a1.5 1.5 0 1 0 -3 0M767.6 507.2a1.5 1.5 0 1 0 3 0a1.5 1.5 0 1 0 -3 0M767.6 516.8a1.5 1.5 0 1 0 3 0a1.5 1.5 0 1 0 -3 0M767.6 526.5a1.5 1.5 0 1 0 3 0a1.5 1.5 0 1 0 -3 0M767.6 536.1a1.5 1.5 0 1 0 3 0a1.5 1.5 0 1 0 -3 0M767.6 545.8a1.5 1.5 0 1 0 3 0a1.5 1.5 0 1 0 -3 0M767.6 574.9a1.5 1.5 0 1 0 3 0a1.5 1.5 0 1 0 -3 0M767.6 584.6a1.5 1.5 0 1 0 3 0a1.5 1.5 0 1 0 -3 0M777.3 400.8a1.5 1.5 0 1 0 3 0a1.5 1.5 0 1 0 -3 0M777.3 410.3a1.5 1.5 0 1 0 3 0a1.5 1.5 0 1 0 -3 0M777.3 439.6a1.5 1.5 0 1 0 3 0a1.5 1.5 0 1 0 -3 0M777.3 449.1a1.5 1.5 0 1 0 3 0a1.5 1.5 0 1 0 -3 0M777.3 458.7a1.5 1.5 0 1 0 3 0a1.5 1.5 0 1 0 -3 0M777.3 468.3a1.5 1.5 0 1 0 3 0a1.5 1.5 0 1 0 -3 0M777.3 477.9a1.5 1.5 0 1 0 3 0a1.5 1.5 0 1 0 -3 0M777.3 507.2a1.5 1.5 0 1 0 3 0a1.5 1.5 0 1 0 -3 0M777.3 516.8a1.5 1.5 0 1 0 3 0a1.5 1.5 0 1 0 -3 0M777.3 526.5a1.5 1.5 0 1 0 3 0a1.5 1.5 0 1 0 -3 0M777.3 536.1a1.5 1.5 0 1 0 3 0a1.5 1.5 0 1 0 -3 0M777.3 545.8a1.5 1.5 0 1 0 3 0a1.5 1.5 0 1 0 -3 0M777.3 574.9a1.5 1.5 0 1 0 3 0a1.5 1.5 0 1 0 -3 0M777.3 584.6a1.5 1.5 0 1 0 3 0a1.5 1.5 0 1 0 -3 0M786.9 400.8a1.5 1.5 0 1 0 3 0a1.5 1.5 0 1 0 -3 0M786.9 410.3a1.5 1.5 0 1 0 3 0a1.5 1.5 0 1 0 -3 0M786.9 439.6a1.5 1.5 0 1 0 3 0a1.5 1.5 0 1 0 -3 0M786.9 449.1a1.5 1.5 0 1 0 3 0a1.5 1.5 0 1 0 -3 0M786.9 458.7a1.5 1.5 0 1 0 3 0a1.5 1.5 0 1 0 -3 0M786.9 468.3a1.5 1.5 0 1 0 3 0a1.5 1.5 0 1 0 -3 0M786.9 477.9a1.5 1.5 0 1 0 3 0a1.5 1.5 0 1 0 -3 0M786.9 507.2a1.5 1.5 0 1 0 3 0a1.5 1.5 0 1 0 -3 0M786.9 516.8a1.5 1.5 0 1 0 3 0a1.5 1.5 0 1 0 -3 0M786.9 526.5a1.5 1.5 0 1 0 3 0a1.5 1.5 0 1 0 -3 0M786.9 536.1a1.5 1.5 0 1 0 3 0a1.5 1.5 0 1 0 -3 0M786.9 545.8a1.5 1.5 0 1 0 3 0a1.5 1.5 0 1 0 -3 0M786.9 574.9a1.5 1.5 0 1 0 3 0a1.5 1.5 0 1 0 -3 0M786.9 584.6a1.5 1.5 0 1 0 3 0a1.5 1.5 0 1 0 -3 0M796.6 400.8a1.5 1.5 0 1 0 3 0a1.5 1.5 0 1 0 -3 0M796.6 410.3a1.5 1.5 0 1 0 3 0a1.5 1.5 0 1 0 -3 0M796.6 439.6a1.5 1.5 0 1 0 3 0a1.5 1.5 0 1 0 -3 0M796.6 449.1a1.5 1.5 0 1 0 3 0a1.5 1.5 0 1 0 -3 0M796.6 458.7a1.5 1.5 0 1 0 3 0a1.5 1.5 0 1 0 -3 0M796.6 468.3a1.5 1.5 0 1 0 3 0a1.5 1.5 0 1 0 -3 0M796.6 477.9a1.5 1.5 0 1 0 3 0a1.5 1.5 0 1 0 -3 0M796.6 507.2a1.5 1.5 0 1 0 3 0a1.5 1.5 0 1 0 -3 0M796.6 516.8a1.5 1.5 0 1 0 3 0a1.5 1.5 0 1 0 -3 0M796.6 526.5a1.5 1.5 0 1 0 3 0a1.5 1.5 0 1 0 -3 0M796.6 536.1a1.5 1.5 0 1 0 3 0a1.5 1.5 0 1 0 -3 0M796.6 545.8a1.5 1.5 0 1 0 3 0a1.5 1.5 0 1 0 -3 0M796.6 574.9a1.5 1.5 0 1 0 3 0a1.5 1.5 0 1 0 -3 0M796.6 584.6a1.5 1.5 0 1 0 3 0a1.5 1.5 0 1 0 -3 0M806.3 400.8a1.5 1.5 0 1 0 3 0a1.5 1.5 0 1 0 -3 0M806.3 410.3a1.5 1.5 0 1 0 3 0a1.5 1.5 0 1 0 -3 0M806.3 439.6a1.5 1.5 0 1 0 3 0a1.5 1.5 0 1 0 -3 0M806.3 449.1a1.5 1.5 0 1 0 3 0a1.5 1.5 0 1 0 -3 0M806.3 458.7a1.5 1.5 0 1 0 3 0a1.5 1.5 0 1 0 -3 0M806.3 468.3a1.5 1.5 0 1 0 3 0a1.5 1.5 0 1 0 -3 0M806.3 477.9a1.5 1.5 0 1 0 3 0a1.5 1.5 0 1 0 -3 0M806.3 507.2a1.5 1.5 0 1 0 3 0a1.5 1.5 0 1 0 -3 0M806.3 516.8a1.5 1.5 0 1 0 3 0a1.5 1.5 0 1 0 -3 0M806.3 526.5a1.5 1.5 0 1 0 3 0a1.5 1.5 0 1 0 -3 0M806.3 536.1a1.5 1.5 0 1 0 3 0a1.5 1.5 0 1 0 -3 0M806.3 545.8a1.5 1.5 0 1 0 3 0a1.5 1.5 0 1 0 -3 0M806.3 574.9a1.5 1.5 0 1 0 3 0a1.5 1.5 0 1 0 -3 0M806.3 584.6a1.5 1.5 0 1 0 3 0a1.5 1.5 0 1 0 -3 0M815.9 400.8a1.5 1.5 0 1 0 3 0a1.5 1.5 0 1 0 -3 0M815.9 410.3a1.5 1.5 0 1 0 3 0a1.5 1.5 0 1 0 -3 0M815.9 439.6a1.5 1.5 0 1 0 3 0a1.5 1.5 0 1 0 -3 0M815.9 449.1a1.5 1.5 0 1 0 3 0a1.5 1.5 0 1 0 -3 0M815.9 458.7a1.5 1.5 0 1 0 3 0a1.5 1.5 0 1 0 -3 0M815.9 468.3a1.5 1.5 0 1 0 3 0a1.5 1.5 0 1 0 -3 0M815.9 477.9a1.5 1.5 0 1 0 3 0a1.5 1.5 0 1 0 -3 0M815.9 507.2a1.5 1.5 0 1 0 3 0a1.5 1.5 0 1 0 -3 0M815.9 516.8a1.5 1.5 0 1 0 3 0a1.5 1.5 0 1 0 -3 0M815.9 526.5a1.5 1.5 0 1 0 3 0a1.5 1.5 0 1 0 -3 0M815.9 536.1a1.5 1.5 0 1 0 3 0a1.5 1.5 0 1 0 -3 0M815.9 545.8a1.5 1.5 0 1 0 3 0a1.5 1.5 0 1 0 -3 0M815.9 574.9a1.5 1.5 0 1 0 3 0a1.5 1.5 0 1 0 -3 0M815.9 584.6a1.5 1.5 0 1 0 3 0a1.5 1.5 0 1 0 -3 0M825.6 400.8a1.5 1.5 0 1 0 3 0a1.5 1.5 0 1 0 -3 0M825.6 410.3a1.5 1.5 0 1 0 3 0a1.5 1.5 0 1 0 -3 0M825.6 439.6a1.5 1.5 0 1 0 3 0a1.5 1.5 0 1 0 -3 0M825.6 449.1a1.5 1.5 0 1 0 3 0a1.5 1.5 0 1 0 -3 0M825.6 458.7a1.5 1.5 0 1 0 3 0a1.5 1.5 0 1 0 -3 0M825.6 468.3a1.5 1.5 0 1 0 3 0a1.5 1.5 0 1 0 -3 0M825.6 477.9a1.5 1.5 0 1 0 3 0a1.5 1.5 0 1 0 -3 0M825.6 507.2a1.5 1.5 0 1 0 3 0a1.5 1.5 0 1 0 -3 0M825.6 516.8a1.5 1.5 0 1 0 3 0a1.5 1.5 0 1 0 -3 0M825.6 526.5a1.5 1.5 0 1 0 3 0a1.5 1.5 0 1 0 -3 0M825.6 536.1a1.5 1.5 0 1 0 3 0a1.5 1.5 0 1 0 -3 0M825.6 545.8a1.5 1.5 0 1 0 3 0a1.5 1.5 0 1 0 -3 0M825.6 574.9a1.5 1.5 0 1 0 3 0a1.5 1.5 0 1 0 -3 0M825.6 584.6a1.5 1.5 0 1 0 3 0a1.5 1.5 0 1 0 -3 0M835.3 400.8a1.5 1.5 0 1 0 3 0a1.5 1.5 0 1 0 -3 0M835.3 410.3a1.5 1.5 0 1 0 3 0a1.5 1.5 0 1 0 -3 0M835.3 439.6a1.5 1.5 0 1 0 3 0a1.5 1.5 0 1 0 -3 0M835.3 449.1a1.5 1.5 0 1 0 3 0a1.5 1.5 0 1 0 -3 0M835.3 458.7a1.5 1.5 0 1 0 3 0a1.5 1.5 0 1 0 -3 0M835.3 468.3a1.5 1.5 0 1 0 3 0a1.5 1.5 0 1 0 -3 0M835.3 477.9a1.5 1.5 0 1 0 3 0a1.5 1.5 0 1 0 -3 0M835.3 507.2a1.5 1.5 0 1 0 3 0a1.5 1.5 0 1 0 -3 0M835.3 516.8a1.5 1.5 0 1 0 3 0a1.5 1.5 0 1 0 -3 0M835.3 526.5a1.5 1.5 0 1 0 3 0a1.5 1.5 0 1 0 -3 0M835.3 536.1a1.5 1.5 0 1 0 3 0a1.5 1.5 0 1 0 -3 0M835.3 545.8a1.5 1.5 0 1 0 3 0a1.5 1.5 0 1 0 -3 0M835.3 574.9a1.5 1.5 0 1 0 3 0a1.5 1.5 0 1 0 -3 0M835.3 584.6a1.5 1.5 0 1 0 3 0a1.5 1.5 0 1 0 -3 0M845.0 400.8a1.5 1.5 0 1 0 3 0a1.5 1.5 0 1 0 -3 0M845.0 410.3a1.5 1.5 0 1 0 3 0a1.5 1.5 0 1 0 -3 0M845.0 439.6a1.5 1.5 0 1 0 3 0a1.5 1.5 0 1 0 -3 0M845.0 449.1a1.5 1.5 0 1 0 3 0a1.5 1.5 0 1 0 -3 0M845.0 458.7a1.5 1.5 0 1 0 3 0a1.5 1.5 0 1 0 -3 0M845.0 468.3a1.5 1.5 0 1 0 3 0a1.5 1.5 0 1 0 -3 0M845.0 477.9a1.5 1.5 0 1 0 3 0a1.5 1.5 0 1 0 -3 0M845.0 507.2a1.5 1.5 0 1 0 3 0a1.5 1.5 0 1 0 -3 0M845.0 516.8a1.5 1.5 0 1 0 3 0a1.5 1.5 0 1 0 -3 0M845.0 526.5a1.5 1.5 0 1 0 3 0a1.5 1.5 0 1 0 -3 0M845.0 536.1a1.5 1.5 0 1 0 3 0a1.5 1.5 0 1 0 -3 0M845.0 545.8a1.5 1.5 0 1 0 3 0a1.5 1.5 0 1 0 -3 0M845.0 574.9a1.5 1.5 0 1 0 3 0a1.5 1.5 0 1 0 -3 0M845.0 584.6a1.5 1.5 0 1 0 3 0a1.5 1.5 0 1 0 -3 0M854.6 400.8a1.5 1.5 0 1 0 3 0a1.5 1.5 0 1 0 -3 0M854.6 410.3a1.5 1.5 0 1 0 3 0a1.5 1.5 0 1 0 -3 0M854.6 439.6a1.5 1.5 0 1 0 3 0a1.5 1.5 0 1 0 -3 0M854.6 449.1a1.5 1.5 0 1 0 3 0a1.5 1.5 0 1 0 -3 0M854.6 458.7a1.5 1.5 0 1 0 3 0a1.5 1.5 0 1 0 -3 0M854.6 468.3a1.5 1.5 0 1 0 3 0a1.5 1.5 0 1 0 -3 0M854.6 477.9a1.5 1.5 0 1 0 3 0a1.5 1.5 0 1 0 -3 0M854.6 507.2a1.5 1.5 0 1 0 3 0a1.5 1.5 0 1 0 -3 0M854.6 516.8a1.5 1.5 0 1 0 3 0a1.5 1.5 0 1 0 -3 0M854.6 526.5a1.5 1.5 0 1 0 3 0a1.5 1.5 0 1 0 -3 0M854.6 536.1a1.5 1.5 0 1 0 3 0a1.5 1.5 0 1 0 -3 0M854.6 545.8a1.5 1.5 0 1 0 3 0a1.5 1.5 0 1 0 -3 0M854.6 574.9a1.5 1.5 0 1 0 3 0a1.5 1.5 0 1 0 -3 0M854.6 584.6a1.5 1.5 0 1 0 3 0a1.5 1.5 0 1 0 -3 0M864.3 400.8a1.5 1.5 0 1 0 3 0a1.5 1.5 0 1 0 -3 0M864.3 410.3a1.5 1.5 0 1 0 3 0a1.5 1.5 0 1 0 -3 0M864.3 439.6a1.5 1.5 0 1 0 3 0a1.5 1.5 0 1 0 -3 0M864.3 449.1a1.5 1.5 0 1 0 3 0a1.5 1.5 0 1 0 -3 0M864.3 458.7a1.5 1.5 0 1 0 3 0a1.5 1.5 0 1 0 -3 0M864.3 468.3a1.5 1.5 0 1 0 3 0a1.5 1.5 0 1 0 -3 0M864.3 477.9a1.5 1.5 0 1 0 3 0a1.5 1.5 0 1 0 -3 0M864.3 507.2a1.5 1.5 0 1 0 3 0a1.5 1.5 0 1 0 -3 0M864.3 516.8a1.5 1.5 0 1 0 3 0a1.5 1.5 0 1 0 -3 0M864.3 526.5a1.5 1.5 0 1 0 3 0a1.5 1.5 0 1 0 -3 0M864.3 536.1a1.5 1.5 0 1 0 3 0a1.5 1.5 0 1 0 -3 0M864.3 545.8a1.5 1.5 0 1 0 3 0a1.5 1.5 0 1 0 -3 0M864.3 574.9a1.5 1.5 0 1 0 3 0a1.5 1.5 0 1 0 -3 0M864.3 584.6a1.5 1.5 0 1 0 3 0a1.5 1.5 0 1 0 -3 0M874.0 400.8a1.5 1.5 0 1 0 3 0a1.5 1.5 0 1 0 -3 0M874.0 410.3a1.5 1.5 0 1 0 3 0a1.5 1.5 0 1 0 -3 0M874.0 439.6a1.5 1.5 0 1 0 3 0a1.5 1.5 0 1 0 -3 0M874.0 449.1a1.5 1.5 0 1 0 3 0a1.5 1.5 0 1 0 -3 0M874.0 458.7a1.5 1.5 0 1 0 3 0a1.5 1.5 0 1 0 -3 0M874.0 468.3a1.5 1.5 0 1 0 3 0a1.5 1.5 0 1 0 -3 0M874.0 477.9a1.5 1.5 0 1 0 3 0a1.5 1.5 0 1 0 -3 0M874.0 507.2a1.5 1.5 0 1 0 3 0a1.5 1.5 0 1 0 -3 0M874.0 516.8a1.5 1.5 0 1 0 3 0a1.5 1.5 0 1 0 -3 0M874.0 526.5a1.5 1.5 0 1 0 3 0a1.5 1.5 0 1 0 -3 0M874.0 536.1a1.5 1.5 0 1 0 3 0a1.5 1.5 0 1 0 -3 0M874.0 545.8a1.5 1.5 0 1 0 3 0a1.5 1.5 0 1 0 -3 0M874.0 574.9a1.5 1.5 0 1 0 3 0a1.5 1.5 0 1 0 -3 0M874.0 584.6a1.5 1.5 0 1 0 3 0a1.5 1.5 0 1 0 -3 0M883.6 400.8a1.5 1.5 0 1 0 3 0a1.5 1.5 0 1 0 -3 0M883.6 410.3a1.5 1.5 0 1 0 3 0a1.5 1.5 0 1 0 -3 0M883.6 439.6a1.5 1.5 0 1 0 3 0a1.5 1.5 0 1 0 -3 0M883.6 449.1a1.5 1.5 0 1 0 3 0a1.5 1.5 0 1 0 -3 0M883.6 458.7a1.5 1.5 0 1 0 3 0a1.5 1.5 0 1 0 -3 0M883.6 468.3a1.5 1.5 0 1 0 3 0a1.5 1.5 0 1 0 -3 0M883.6 477.9a1.5 1.5 0 1 0 3 0a1.5 1.5 0 1 0 -3 0M883.6 507.2a1.5 1.5 0 1 0 3 0a1.5 1.5 0 1 0 -3 0M883.6 516.8a1.5 1.5 0 1 0 3 0a1.5 1.5 0 1 0 -3 0M883.6 526.5a1.5 1.5 0 1 0 3 0a1.5 1.5 0 1 0 -3 0M883.6 536.1a1.5 1.5 0 1 0 3 0a1.5 1.5 0 1 0 -3 0M883.6 545.8a1.5 1.5 0 1 0 3 0a1.5 1.5 0 1 0 -3 0M883.6 574.9a1.5 1.5 0 1 0 3 0a1.5 1.5 0 1 0 -3 0M883.6 584.6a1.5 1.5 0 1 0 3 0a1.5 1.5 0 1 0 -3 0" fill="#eaeaea" stroke="#eaeaea" stroke-width="1.6" opacity="0.8"/>
<path d="M603.2 400.8a1.5 1.5 0 1 0 3 0a1.5 1.5 0 1 0 -3 0M603.2 410.3a1.5 1.5 0 1 0 3 0a1.5 1.5 0 1 0 -3 0M603.2 439.6a1.5 1.5 0 1 0 3 0a1.5 1.5 0 1 0 -3 0M603.2 449.1a1.5 1.5 0 1 0 3 0a1.5 1.5 0 1 0 -3 0M603.2 458.7a1.5 1.5 0 1 0 3 0a1.5 1.5 0 1 0 -3 0M603.2 468.3a1.5 1.5 0 1 0 3 0a1.5 1.5 0 1 0 -3 0M603.2 477.9a1.5 1.5 0 1 0 3 0a1.5 1.5 0 1 0 -3 0M603.2 507.2a1.5 1.5 0 1 0 3 0a1.5 1.5 0 1 0 -3 0M603.2 516.8a1.5 1.5 0 1 0 3 0a1.5 1.5 0 1 0 -3 0M603.2 526.5a1.5 1.5 0 1 0 3 0a1.5 1.5 0 1 0 -3 0M603.2 536.1a1.5 1.5 0 1 0 3 0a1.5 1.5 0 1 0 -3 0M603.2 545.8a1.5 1.5 0 1 0 3 0a1.5 1.5 0 1 0 -3 0M603.2 574.9a1.5 1.5 0 1 0 3 0a1.5 1.5 0 1 0 -3 0M603.2 584.6a1.5 1.5 0 1 0 3 0a1.5 1.5 0 1 0 -3 0M612.9 400.8a1.5 1.5 0 1 0 3 0a1.5 1.5 0 1 0 -3 0M612.9 410.3a1.5 1.5 0 1 0 3 0a1.5 1.5 0 1 0 -3 0M612.9 439.6a1.5 1.5 0 1 0 3 0a1.5 1.5 0 1 0 -3 0M612.9 449.1a1.5 1.5 0 1 0 3 0a1.5 1.5 0 1 0 -3 0M612.9 458.7a1.5 1.5 0 1 0 3 0a1.5 1.5 0 1 0 -3 0M612.9 468.3a1.5 1.5 0 1 0 3 0a1.5 1.5 0 1 0 -3 0M612.9 477.9a1.5 1.5 0 1 0 3 0a1.5 1.5 0 1 0 -3 0M612.9 507.2a1.5 1.5 0 1 0 3 0a1.5 1.5 0 1 0 -3 0M612.9 516.8a1.5 1.5 0 1 0 3 0a1.5 1.5 0 1 0 -3 0M612.9 526.5a1.5 1.5 0 1 0 3 0a1.5 1.5 0 1 0 -3 0M612.9 536.1a1.5 1.5 0 1 0 3 0a1.5 1.5 0 1 0 -3 0M612.9 545.8a1.5 1.5 0 1 0 3 0a1.5 1.5 0 1 0 -3 0M612.9 574.9a1.5 1.5 0 1 0 3 0a1.5 1.5 0 1 0 -3 0M612.9 584.6a1.5 1.5 0 1 0 3 0a1.5 1.5 0 1 0 -3 0M622.5 400.8a1.5 1.5 0 1 0 3 0a1.5 1.5 0 1 0 -3 0M622.5 410.3a1.5 1.5 0 1 0 3 0a1.5 1.5 0 1 0 -3 0M622.5 439.6a1.5 1.5 0 1 0 3 0a1.5 1.5 0 1 0 -3 0M622.5 449.1a1.5 1.5 0 1 0 3 0a1.5 1.5 0 1 0 -3 0M622.5 458.7a1.5 1.5 0 1 0 3 0a1.5 1.5 0 1 0 -3 0M622.5 468.3a1.5 1.5 0 1 0 3 0a1.5 1.5 0 1 0 -3 0M622.5 477.9a1.5 1.5 0 1 0 3 0a1.5 1.5 0 1 0 -3 0M622.5 507.2a1.5 1.5 0 1 0 3 0a1.5 1.5 0 1 0 -3 0M622.5 516.8a1.5 1.5 0 1 0 3 0a1.5 1.5 0 1 0 -3 0M622.5 526.5a1.5 1.5 0 1 0 3 0a1.5 1.5 0 1 0 -3 0M622.5 536.1a1.5 1.5 0 1 0 3 0a1.5 1.5 0 1 0 -3 0M622.5 545.8a1.5 1.5 0 1 0 3 0a1.5 1.5 0 1 0 -3 0M622.5 574.9a1.5 1.5 0 1 0 3 0a1.5 1.5 0 1 0 -3 0M622.5 584.6a1.5 1.5 0 1 0 3 0a1.5 1.5 0 1 0 -3 0M632.2 400.8a1.5 1.5 0 1 0 3 0a1.5 1.5 0 1 0 -3 0M632.2 410.3a1.5 1.5 0 1 0 3 0a1.5 1.5 0 1 0 -3 0M632.2 439.6a1.5 1.5 0 1 0 3 0a1.5 1.5 0 1 0 -3 0M632.2 449.1a1.5 1.5 0 1 0 3 0a1.5 1.5 0 1 0 -3 0M632.2 458.7a1.5 1.5 0 1 0 3 0a1.5 1.5 0 1 0 -3 0M632.2 468.3a1.5 1.5 0 1 0 3 0a1.5 1.5 0 1 0 -3 0M632.2 477.9a1.5 1.5 0 1 0 3 0a1.5 1.5 0 1 0 -3 0M632.2 507.2a1.5 1.5 0 1 0 3 0a1.5 1.5 0 1 0 -3 0M632.2 516.8a1.5 1.5 0 1 0 3 0a1.5 1.5 0 1 0 -3 0M632.2 526.5a1.5 1.5 0 1 0 3 0a1.5 1.5 0 1 0 -3 0M632.2 536.1a1.5 1.5 0 1 0 3 0a1.5 1.5 0 1 0 -3 0M632.2 545.8a1.5 1.5 0 1 0 3 0a1.5 1.5 0 1 0 -3 0M632.2 574.9a1.5 1.5 0 1 0 3 0a1.5 1.5 0 1 0 -3 0M632.2 584.6a1.5 1.5 0 1 0 3 0a1.5 1.5 0 1 0 -3 0M641.9 400.8a1.5 1.5 0 1 0 3 0a1.5 1.5 0 1 0 -3 0M641.9 410.3a1.5 1.5 0 1 0 3 0a1.5 1.5 0 1 0 -3 0M641.9 439.6a1.5 1.5 0 1 0 3 0a1.5 1.5 0 1 0 -3 0M641.9 449.1a1.5 1.5 0 1 0 3 0a1.5 1.5 0 1 0 -3 0M641.9 458.7a1.5 1.5 0 1 0 3 0a1.5 1.5 0 1 0 -3 0M641.9 468.3a1.5 1.5 0 1 0 3 0a1.5 1.5 0 1 0 -3 0M641.9 477.9a1.5 1.5 0 1 0 3 0a1.5 1.5 0 1 0 -3 0M641.9 507.2a1.5 1.5 0 1 0 3 0a1.5 1.5 0 1 0 -3 0M641.9 516.8a1.5 1.5 0 1 0 3 0a1.5 1.5 0 1 0 -3 0M641.9 526.5a1.5 1.5 0 1 0 3 0a1.5 1.5 0 1 0 -3 0M641.9 536.1a1.5 1.5 0 1 0 3 0a1.5 1.5 0 1 0 -3 0M641.9 545.8a1.5 1.5 0 1 0 3 0a1.5 1.5 0 1 0 -3 0M641.9 574.9a1.5 1.5 0 1 0 3 0a1.5 1.5 0 1 0 -3 0M641.9 584.6a1.5 1.5 0 1 0 3 0a1.5 1.5 0 1 0 -3 0M651.6 400.8a1.5 1.5 0 1 0 3 0a1.5 1.5 0 1 0 -3 0M651.6 410.3a1.5 1.5 0 1 0 3 0a1.5 1.5 0 1 0 -3 0M651.6 439.6a1.5 1.5 0 1 0 3 0a1.5 1.5 0 1 0 -3 0M651.6 449.1a1.5 1.5 0 1 0 3 0a1.5 1.5 0 1 0 -3 0M651.6 458.7a1.5 1.5 0 1 0 3 0a1.5 1.5 0 1 0 -3 0M651.6 468.3a1.5 1.5 0 1 0 3 0a1.5 1.5 0 1 0 -3 0M651.6 477.9a1.5 1.5 0 1 0 3 0a1.5 1.5 0 1 0 -3 0M651.6 507.2a1.5 1.5 0 1 0 3 0a1.5 1.5 0 1 0 -3 0M651.6 516.8a1.5 1.5 0 1 0 3 0a1.5 1.5 0 1 0 -3 0M651.6 526.5a1.5 1.5 0 1 0 3 0a1.5 1.5 0 1 0 -3 0M651.6 536.1a1.5 1.5 0 1 0 3 0a1.5 1.5 0 1 0 -3 0M651.6 545.8a1.5 1.5 0 1 0 3 0a1.5 1.5 0 1 0 -3 0M651.6 574.9a1.5 1.5 0 1 0 3 0a1.5 1.5 0 1 0 -3 0M651.6 584.6a1.5 1.5 0 1 0 3 0a1.5 1.5 0 1 0 -3 0M661.2 400.8a1.5 1.5 0 1 0 3 0a1.5 1.5 0 1 0 -3 0M661.2 410.3a1.5 1.5 0 1 0 3 0a1.5 1.5 0 1 0 -3 0M661.2 439.6a1.5 1.5 0 1 0 3 0a1.5 1.5 0 1 0 -3 0M661.2 449.1a1.5 1.5 0 1 0 3 0a1.5 1.5 0 1 0 -3 0M661.2 458.7a1.5 1.5 0 1 0 3 0a1.5 1.5 0 1 0 -3 0M661.2 468.3a1.5 1.5 0 1 0 3 0a1.5 1.5 0 1 0 -3 0M661.2 477.9a1.5 1.5 0 1 0 3 0a1.5 1.5 0 1 0 -3 0M661.2 507.2a1.5 1.5 0 1 0 3 0a1.5 1.5 0 1 0 -3 0M661.2 516.8a1.5 1.5 0 1 0 3 0a1.5 1.5 0 1 0 -3 0M661.2 526.5a1.5 1.5 0 1 0 3 0a1.5 1.5 0 1 0 -3 0M661.2 536.1a1.5 1.5 0 1 0 3 0a1.5 1.5 0 1 0 -3 0M661.2 545.8a1.5 1.5 0 1 0 3 0a1.5 1.5 0 1 0 -3 0M661.2 574.9a1.5 1.5 0 1 0 3 0a1.5 1.5 0 1 0 -3 0M661.2 584.6a1.5 1.5 0 1 0 3 0a1.5 1.5 0 1 0 -3 0M670.9 400.8a1.5 1.5 0 1 0 3 0a1.5 1.5 0 1 0 -3 0M670.9 410.3a1.5 1.5 0 1 0 3 0a1.5 1.5 0 1 0 -3 0M670.9 439.6a1.5 1.5 0 1 0 3 0a1.5 1.5 0 1 0 -3 0M670.9 449.1a1.5 1.5 0 1 0 3 0a1.5 1.5 0 1 0 -3 0M670.9 458.7a1.5 1.5 0 1 0 3 0a1.5 1.5 0 1 0 -3 0M670.9 468.3a1.5 1.5 0 1 0 3 0a1.5 1.5 0 1 0 -3 0M670.9 477.9a1.5 1.5 0 1 0 3 0a1.5 1.5 0 1 0 -3 0M670.9 507.2a1.5 1.5 0 1 0 3 0a1.5 1.5 0 1 0 -3 0M670.9 516.8a1.5 1.5 0 1 0 3 0a1.5 1.5 0 1 0 -3 0M670.9 526.5a1.5 1.5 0 1 0 3 0a1.5 1.5 0 1 0 -3 0M670.9 536.1a1.5 1.5 0 1 0 3 0a1.5 1.5 0 1 0 -3 0M670.9 545.8a1.5 1.5 0 1 0 3 0a1.5 1.5 0 1 0 -3 0M670.9 574.9a1.5 1.5 0 1 0 3 0a1.5 1.5 0 1 0 -3 0M670.9 584.6a1.5 1.5 0 1 0 3 0a1.5 1.5 0 1 0 -3 0M680.6 400.8a1.5 1.5 0 1 0 3 0a1.5 1.5 0 1 0 -3 0M680.6 410.3a1.5 1.5 0 1 0 3 0a1.5 1.5 0 1 0 -3 0M680.6 439.6a1.5 1.5 0 1 0 3 0a1.5 1.5 0 1 0 -3 0M680.6 449.1a1.5 1.5 0 1 0 3 0a1.5 1.5 0 1 0 -3 0M680.6 458.7a1.5 1.5 0 1 0 3 0a1.5 1.5 0 1 0 -3 0M680.6 468.3a1.5 1.5 0 1 0 3 0a1.5 1.5 0 1 0 -3 0M680.6 477.9a1.5 1.5 0 1 0 3 0a1.5 1.5 0 1 0 -3 0M680.6 507.2a1.5 1.5 0 1 0 3 0a1.5 1.5 0 1 0 -3 0M680.6 516.8a1.5 1.5 0 1 0 3 0a1.5 1.5 0 1 0 -3 0M680.6 526.5a1.5 1.5 0 1 0 3 0a1.5 1.5 0 1 0 -3 0M680.6 536.1a1.5 1.5 0 1 0 3 0a1.5 1.5 0 1 0 -3 0M680.6 545.8a1.5 1.5 0 1 0 3 0a1.5 1.5 0 1 0 -3 0M680.6 574.9a1.5 1.5 0 1 0 3 0a1.5 1.5 0 1 0 -3 0M680.6 584.6a1.5 1.5 0 1 0 3 0a1.5 1.5 0 1 0 -3 0M690.2 400.8a1.5 1.5 0 1 0 3 0a1.5 1.5 0 1 0 -3 0M690.2 410.3a1.5 1.5 0 1 0 3 0a1.5 1.5 0 1 0 -3 0M690.2 439.6a1.5 1.5 0 1 0 3 0a1.5 1.5 0 1 0 -3 0M690.2 449.1a1.5 1.5 0 1 0 3 0a1.5 1.5 0 1 0 -3 0M690.2 458.7a1.5 1.5 0 1 0 3 0a1.5 1.5 0 1 0 -3 0M690.2 468.3a1.5 1.5 0 1 0 3 0a1.5 1.5 0 1 0 -3 0M690.2 477.9a1.5 1.5 0 1 0 3 0a1.5 1.5 0 1 0 -3 0M690.2 507.2a1.5 1.5 0 1 0 3 0a1.5 1.5 0 1 0 -3 0M690.2 516.8a1.5 1.5 0 1 0 3 0a1.5 1.5 0 1 0 -3 0M690.2 526.5a1.5 1.5 0 1 0 3 0a1.5 1.5 0 1 0 -3 0M690.2 536.1a1.5 1.5 0 1 0 3 0a1.5 1.5 0 1 0 -3 0M690.2 545.8a1.5 1.5 0 1 0 3 0a1.5 1.5 0 1 0 -3 0M690.2 574.9a1.5 1.5 0 1 0 3 0a1.5 1.5 0 1 0 -3 0M690.2 584.6a1.5 1.5 0 1 0 3 0a1.5 1.5 0 1 0 -3 0M699.9 400.8a1.5 1.5 0 1 0 3 0a1.5 1.5 0 1 0 -3 0M699.9 410.3a1.5 1.5 0 1 0 3 0a1.5 1.5 0 1 0 -3 0M699.9 439.6a1.5 1.5 0 1 0 3 0a1.5 1.5 0 1 0 -3 0M699.9 449.1a1.5 1.5 0 1 0 3 0a1.5 1.5 0 1 0 -3 0M699.9 458.7a1.5 1.5 0 1 0 3 0a1.5 1.5 0 1 0 -3 0M699.9 468.3a1.5 1.5 0 1 0 3 0a1.5 1.5 0 1 0 -3 0M699.9 477.9a1.5 1.5 0 1 0 3 0a1.5 1.5 0 1 0 -3 0M699.9 507.2a1.5 1.5 0 1 0 3 0a1.5 1.5 0 1 0 -3 0M699.9 516.8a1.5 1.5 0 1 0 3 0a1.5 1.5 0 1 0 -3 0M699.9 526.5a1.5 1.5 0 1 0 3 0a1.5 1.5 0 1 0 -3 0M699.9 536.1a1.5 1.5 0 1 0 3 0a1.5 1.5 0 1 0 -3 0M699.9 545.8a1.5 1.5 0 1 0 3 0a1.5 1.5 0 1 0 -3 0M699.9 574.9a1.5 1.5 0 1 0 3 0a1.5 1.5 0 1 0 -3 0M699.9 584.6a1.5 1.5 0 1 0 3 0a1.5 1.5 0 1 0 -3 0M709.6 400.8a1.5 1.5 0 1 0 3 0a1.5 1.5 0 1 0 -3 0M709.6 410.3a1.5 1.5 0 1 0 3 0a1.5 1.5 0 1 0 -3 0M709.6 439.6a1.5 1.5 0 1 0 3 0a1.5 1.5 0 1 0 -3 0M709.6 449.1a1.5 1.5 0 1 0 3 0a1.5 1.5 0 1 0 -3 0M709.6 458.7a1.5 1.5 0 1 0 3 0a1.5 1.5 0 1 0 -3 0M709.6 468.3a1.5 1.5 0 1 0 3 0a1.5 1.5 0 1 0 -3 0M709.6 477.9a1.5 1.5 0 1 0 3 0a1.5 1.5 0 1 0 -3 0M709.6 507.2a1.5 1.5 0 1 0 3 0a1.5 1.5 0 1 0 -3 0M709.6 516.8a1.5 1.5 0 1 0 3 0a1.5 1.5 0 1 0 -3 0M709.6 526.5a1.5 1.5 0 1 0 3 0a1.5 1.5 0 1 0 -3 0M709.6 536.1a1.5 1.5 0 1 0 3 0a1.5 1.5 0 1 0 -3 0M709.6 545.8a1.5 1.5 0 1 0 3 0a1.5 1.5 0 1 0 -3 0M709.6 574.9a1.5 1.5 0 1 0 3 0a1.5 1.5 0 1 0 -3 0M709.6 584.6a1.5 1.5 0 1 0 3 0a1.5 1.5 0 1 0 -3 0M719.2 400.8a1.5 1.5 0 1 0 3 0a1.5 1.5 0 1 0 -3 0M719.2 410.3a1.5 1.5 0 1 0 3 0a1.5 1.5 0 1 0 -3 0M719.2 439.6a1.5 1.5 0 1 0 3 0a1.5 1.5 0 1 0 -3 0M719.2 449.1a1.5 1.5 0 1 0 3 0a1.5 1.5 0 1 0 -3 0M719.2 458.7a1.5 1.5 0 1 0 3 0a1.5 1.5 0 1 0 -3 0M719.2 468.3a1.5 1.5 0 1 0 3 0a1.5 1.5 0 1 0 -3 0M719.2 477.9a1.5 1.5 0 1 0 3 0a1.5 1.5 0 1 0 -3 0M719.2 507.2a1.5 1.5 0 1 0 3 0a1.5 1.5 0 1 0 -3 0M719.2 516.8a1.5 1.5 0 1 0 3 0a1.5 1.5 0 1 0 -3 0M719.2 526.5a1.5 1.5 0 1 0 3 0a1.5 1.5 0 1 0 -3 0M719.2 536.1a1.5 1.5 0 1 0 3 0a1.5 1.5 0 1 0 -3 0M719.2 545.8a1.5 1.5 0 1 0 3 0a1.5 1.5 0 1 0 -3 0M719.2 574.9a1.5 1.5 0 1 0 3 0a1.5 1.5 0 1 0 -3 0M719.2 584.6a1.5 1.5 0 1 0 3 0a1.5 1.5 0 1 0 -3 0M728.9 400.8a1.5 1.5 0 1 0 3 0a1.5 1.5 0 1 0 -3 0M728.9 410.3a1.5 1.5 0 1 0 3 0a1.5 1.5 0 1 0 -3 0M728.9 439.6a1.5 1.5 0 1 0 3 0a1.5 1.5 0 1 0 -3 0M728.9 449.1a1.5 1.5 0 1 0 3 0a1.5 1.5 0 1 0 -3 0M728.9 458.7a1.5 1.5 0 1 0 3 0a1.5 1.5 0 1 0 -3 0M728.9 468.3a1.5 1.5 0 1 0 3 0a1.5 1.5 0 1 0 -3 0M728.9 477.9a1.5 1.5 0 1 0 3 0a1.5 1.5 0 1 0 -3 0M728.9 507.2a1.5 1.5 0 1 0 3 0a1.5 1.5 0 1 0 -3 0M728.9 516.8a1.5 1.5 0 1 0 3 0a1.5 1.5 0 1 0 -3 0M728.9 526.5a1.5 1.5 0 1 0 3 0a1.5 1.5 0 1 0 -3 0M728.9 536.1a1.5 1.5 0 1 0 3 0a1.5 1.5 0 1 0 -3 0M728.9 545.8a1.5 1.5 0 1 0 3 0a1.5 1.5 0 1 0 -3 0M728.9 574.9a1.5 1.5 0 1 0 3 0a1.5 1.5 0 1 0 -3 0M728.9 584.6a1.5 1.5 0 1 0 3 0a1.5 1.5 0 1 0 -3 0M738.6 400.8a1.5 1.5 0 1 0 3 0a1.5 1.5 0 1 0 -3 0M738.6 410.3a1.5 1.5 0 1 0 3 0a1.5 1.5 0 1 0 -3 0M738.6 439.6a1.5 1.5 0 1 0 3 0a1.5 1.5 0 1 0 -3 0M738.6 449.1a1.5 1.5 0 1 0 3 0a1.5 1.5 0 1 0 -3 0M738.6 458.7a1.5 1.5 0 1 0 3 0a1.5 1.5 0 1 0 -3 0M738.6 468.3a1.5 1.5 0 1 0 3 0a1.5 1.5 0 1 0 -3 0M738.6 477.9a1.5 1.5 0 1 0 3 0a1.5 1.5 0 1 0 -3 0M738.6 507.2a1.5 1.5 0 1 0 3 0a1.5 1.5 0 1 0 -3 0M738.6 516.8a1.5 1.5 0 1 0 3 0a1.5 1.5 0 1 0 -3 0M738.6 526.5a1.5 1.5 0 1 0 3 0a1.5 1.5 0 1 0 -3 0M738.6 536.1a1.5 1.5 0 1 0 3 0a1.5 1.5 0 1 0 -3 0M738.6 545.8a1.5 1.5 0 1 0 3 0a1.5 1.5 0 1 0 -3 0M738.6 574.9a1.5 1.5 0 1 0 3 0a1.5 1.5 0 1 0 -3 0M738.6 584.6a1.5 1.5 0 1 0 3 0a1.5 1.5 0 1 0 -3 0M748.2 400.8a1.5 1.5 0 1 0 3 0a1.5 1.5 0 1 0 -3 0M748.2 410.3a1.5 1.5 0 1 0 3 0a1.5 1.5 0 1 0 -3 0M748.2 439.6a1.5 1.5 0 1 0 3 0a1.5 1.5 0 1 0 -3 0M748.2 449.1a1.5 1.5 0 1 0 3 0a1.5 1.5 0 1 0 -3 0M748.2 458.7a1.5 1.5 0 1 0 3 0a1.5 1.5 0 1 0 -3 0M748.2 468.3a1.5 1.5 0 1 0 3 0a1.5 1.5 0 1 0 -3 0M748.2 477.9a1.5 1.5 0 1 0 3 0a1.5 1.5 0 1 0 -3 0M748.2 507.2a1.5 1.5 0 1 0 3 0a1.5 1.5 0 1 0 -3 0M748.2 516.8a1.5 1.5 0 1 0 3 0a1.5 1.5 0 1 0 -3 0M748.2 526.5a1.5 1.5 0 1 0 3 0a1.5 1.5 0 1 0 -3 0M748.2 536.1a1.5 1.5 0 1 0 3 0a1.5 1.5 0 1 0 -3 0M748.2 545.8a1.5 1.5 0 1 0 3 0a1.5 1.5 0 1 0 -3 0M748.2 574.9a1.5 1.5 0 1 0 3 0a1.5 1.5 0 1 0 -3 0M748.2 584.6a1.5 1.5 0 1 0 3 0a1.5 1.5 0 1 0 -3 0M757.9 400.8a1.5 1.5 0 1 0 3 0a1.5 1.5 0 1 0 -3 0M757.9 410.3a1.5 1.5 0 1 0 3 0a1.5 1.5 0 1 0 -3 0M757.9 439.6a1.5 1.5 0 1 0 3 0a1.5 1.5 0 1 0 -3 0M757.9 449.1a1.5 1.5 0 1 0 3 0a1.5 1.5 0 1 0 -3 0M757.9 458.7a1.5 1.5 0 1 0 3 0a1.5 1.5 0 1 0 -3 0M757.9 468.3a1.5 1.5 0 1 0 3 0a1.5 1.5 0 1 0 -3 0M757.9 477.9a1.5 1.5 0 1 0 3 0a1.5 1.5 0 1 0 -3 0M757.9 507.2a1.5 1.5 0 1 0 3 0a1.5 1.5 0 1 0 -3 0M757.9 516.8a1.5 1.5 0 1 0 3 0a1.5 1.5 0 1 0 -3 0M757.9 526.5a1.5 1.5 0 1 0 3 0a1.5 1.5 0 1 0 -3 0M757.9 536.1a1.5 1.5 0 1 0 3 0a1.5 1.5 0 1 0 -3 0M757.9 545.8a1.5 1.5 0 1 0 3 0a1.5 1.5 0 1 0 -3 0M757.9 574.9a1.5 1.5 0 1 0 3 0a1.5 1.5 0 1 0 -3 0M757.9 584.6a1.5 1.5 0 1 0 3 0a1.5 1.5 0 1 0 -3 0M767.6 400.8a1.5 1.5 0 1 0 3 0a1.5 1.5 0 1 0 -3 0M767.6 410.3a1.5 1.5 0 1 0 3 0a1.5 1.5 0 1 0 -3 0M767.6 439.6a1.5 1.5 0 1 0 3 0a1.5 1.5 0 1 0 -3 0M767.6 449.1a1.5 1.5 0 1 0 3 0a1.5 1.5 0 1 0 -3 0M767.6 458.7a1.5 1.5 0 1 0 3 0a1.5 1.5 0 1 0 -3 0M767.6 468.3a1.5 1.5 0 1 0 3 0a1.5 1.5 0 1 0 -3 0M767.6 477.9a1.5 1.5 0 1 0 3 0a1.5 1.5 0 1 0 -3 0M767.6 507.2a1.5 1.5 0 1 0 3 0a1.5 1.5 0 1 0 -3 0M767.6 516.8a1.5 1.5 0 1 0 3 0a1.5 1.5 0 1 0 -3 0M767.6 526.5a1.5 1.5 0 1 0 3 0a1.5 1.5 0 1 0 -3 0M767.6 536.1a1.5 1.5 0 1 0 3 0a1.5 1.5 0 1 0 -3 0M767.6 545.8a1.5 1.5 0 1 0 3 0a1.5 1.5 0 1 0 -3 0M767.6 574.9a1.5 1.5 0 1 0 3 0a1.5 1.5 0 1 0 -3 0M767.6 584.6a1.5 1.5 0 1 0 3 0a1.5 1.5 0 1 0 -3 0M777.3 400.8a1.5 1.5 0 1 0 3 0a1.5 1.5 0 1 0 -3 0M777.3 410.3a1.5 1.5 0 1 0 3 0a1.5 1.5 0 1 0 -3 0M777.3 439.6a1.5 1.5 0 1 0 3 0a1.5 1.5 0 1 0 -3 0M777.3 449.1a1.5 1.5 0 1 0 3 0a1.5 1.5 0 1 0 -3 0M777.3 458.7a1.5 1.5 0 1 0 3 0a1.5 1.5 0 1 0 -3 0M777.3 468.3a1.5 1.5 0 1 0 3 0a1.5 1.5 0 1 0 -3 0M777.3 477.9a1.5 1.5 0 1 0 3 0a1.5 1.5 0 1 0 -3 0M777.3 507.2a1.5 1.5 0 1 0 3 0a1.5 1.5 0 1 0 -3 0M777.3 516.8a1.5 1.5 0 1 0 3 0a1.5 1.5 0 1 0 -3 0M777.3 526.5a1.5 1.5 0 1 0 3 0a1.5 1.5 0 1 0 -3 0M777.3 536.1a1.5 1.5 0 1 0 3 0a1.5 1.5 0 1 0 -3 0M777.3 545.8a1.5 1.5 0 1 0 3 0a1.5 1.5 0 1 0 -3 0M777.3 574.9a1.5 1.5 0 1 0 3 0a1.5 1.5 0 1 0 -3 0M777.3 584.6a1.5 1.5 0 1 0 3 0a1.5 1.5 0 1 0 -3 0M786.9 400.8a1.5 1.5 0 1 0 3 0a1.5 1.5 0 1 0 -3 0M786.9 410.3a1.5 1.5 0 1 0 3 0a1.5 1.5 0 1 0 -3 0M786.9 439.6a1.5 1.5 0 1 0 3 0a1.5 1.5 0 1 0 -3 0M786.9 449.1a1.5 1.5 0 1 0 3 0a1.5 1.5 0 1 0 -3 0M786.9 458.7a1.5 1.5 0 1 0 3 0a1.5 1.5 0 1 0 -3 0M786.9 468.3a1.5 1.5 0 1 0 3 0a1.5 1.5 0 1 0 -3 0M786.9 477.9a1.5 1.5 0 1 0 3 0a1.5 1.5 0 1 0 -3 0M786.9 507.2a1.5 1.5 0 1 0 3 0a1.5 1.5 0 1 0 -3 0M786.9 516.8a1.5 1.5 0 1 0 3 0a1.5 1.5 0 1 0 -3 0M786.9 526.5a1.5 1.5 0 1 0 3 0a1.5 1.5 0 1 0 -3 0M786.9 536.1a1.5 1.5 0 1 0 3 0a1.5 1.5 0 1 0 -3 0M786.9 545.8a1.5 1.5 0 1 0 3 0a1.5 1.5 0 1 0 -3 0M786.9 574.9a1.5 1.5 0 1 0 3 0a1.5 1.5 0 1 0 -3 0M786.9 584.6a1.5 1.5 0 1 0 3 0a1.5 1.5 0 1 0 -3 0M796.6 400.8a1.5 1.5 0 1 0 3 0a1.5 1.5 0 1 0 -3 0M796.6 410.3a1.5 1.5 0 1 0 3 0a1.5 1.5 0 1 0 -3 0M796.6 439.6a1.5 1.5 0 1 0 3 0a1.5 1.5 0 1 0 -3 0M796.6 449.1a1.5 1.5 0 1 0 3 0a1.5 1.5 0 1 0 -3 0M796.6 458.7a1.5 1.5 0 1 0 3 0a1.5 1.5 0 1 0 -3 0M796.6 468.3a1.5 1.5 0 1 0 3 0a1.5 1.5 0 1 0 -3 0M796.6 477.9a1.5 1.5 0 1 0 3 0a1.5 1.5 0 1 0 -3 0M796.6 507.2a1.5 1.5 0 1 0 3 0a1.5 1.5 0 1 0 -3 0M796.6 516.8a1.5 1.5 0 1 0 3 0a1.5 1.5 0 1 0 -3 0M796.6 526.5a1.5 1.5 0 1 0 3 0a1.5 1.5 0 1 0 -3 0M796.6 536.1a1.5 1.5 0 1 0 3 0a1.5 1.5 0 1 0 -3 0M796.6 545.8a1.5 1.5 0 1 0 3 0a1.5 1.5 0 1 0 -3 0M796.6 574.9a1.5 1.5 0 1 0 3 0a1.5 1.5 0 1 0 -3 0M796.6 584.6a1.5 1.5 0 1 0 3 0a1.5 1.5 0 1 0 -3 0M806.3 400.8a1.5 1.5 0 1 0 3 0a1.5 1.5 0 1 0 -3 0M806.3 410.3a1.5 1.5 0 1 0 3 0a1.5 1.5 0 1 0 -3 0M806.3 439.6a1.5 1.5 0 1 0 3 0a1.5 1.5 0 1 0 -3 0M806.3 449.1a1.5 1.5 0 1 0 3 0a1.5 1.5 0 1 0 -3 0M806.3 458.7a1.5 1.5 0 1 0 3 0a1.5 1.5 0 1 0 -3 0M806.3 468.3a1.5 1.5 0 1 0 3 0a1.5 1.5 0 1 0 -3 0M806.3 477.9a1.5 1.5 0 1 0 3 0a1.5 1.5 0 1 0 -3 0M806.3 507.2a1.5 1.5 0 1 0 3 0a1.5 1.5 0 1 0 -3 0M806.3 516.8a1.5 1.5 0 1 0 3 0a1.5 1.5 0 1 0 -3 0M806.3 526.5a1.5 1.5 0 1 0 3 0a1.5 1.5 0 1 0 -3 0M806.3 536.1a1.5 1.5 0 1 0 3 0a1.5 1.5 0 1 0 -3 0M806.3 545.8a1.5 1.5 0 1 0 3 0a1.5 1.5 0 1 0 -3 0M806.3 574.9a1.5 1.5 0 1 0 3 0a1.5 1.5 0 1 0 -3 0M806.3 584.6a1.5 1.5 0 1 0 3 0a1.5 1.5 0 1 0 -3 0M815.9 400.8a1.5 1.5 0 1 0 3 0a1.5 1.5 0 1 0 -3 0M815.9 410.3a1.5 1.5 0 1 0 3 0a1.5 1.5 0 1 0 -3 0M815.9 439.6a1.5 1.5 0 1 0 3 0a1.5 1.5 0 1 0 -3 0M815.9 449.1a1.5 1.5 0 1 0 3 0a1.5 1.5 0 1 0 -3 0M815.9 458.7a1.5 1.5 0 1 0 3 0a1.5 1.5 0 1 0 -3 0M815.9 468.3a1.5 1.5 0 1 0 3 0a1.5 1.5 0 1 0 -3 0M815.9 477.9a1.5 1.5 0 1 0 3 0a1.5 1.5 0 1 0 -3 0M815.9 507.2a1.5 1.5 0 1 0 3 0a1.5 1.5 0 1 0 -3 0M815.9 516.8a1.5 1.5 0 1 0 3 0a1.5 1.5 0 1 0 -3 0M815.9 526.5a1.5 1.5 0 1 0 3 0a1.5 1.5 0 1 0 -3 0M815.9 536.1a1.5 1.5 0 1 0 3 0a1.5 1.5 0 1 0 -3 0M815.9 545.8a1.5 1.5 0 1 0 3 0a1.5 1.5 0 1 0 -3 0M815.9 574.9a1.5 1.5 0 1 0 3 0a1.5 1.5 0 1 0 -3 0M815.9 584.6a1.5 1.5 0 1 0 3 0a1.5 1.5 0 1 0 -3 0M825.6 400.8a1.5 1.5 0 1 0 3 0a1.5 1.5 0 1 0 -3 0M825.6 410.3a1.5 1.5 0 1 0 3 0a1.5 1.5 0 1 0 -3 0M825.6 439.6a1.5 1.5 0 1 0 3 0a1.5 1.5 0 1 0 -3 0M825.6 449.1a1.5 1.5 0 1 0 3 0a1.5 1.5 0 1 0 -3 0M825.6 458.7a1.5 1.5 0 1 0 3 0a1.5 1.5 0 1 0 -3 0M825.6 468.3a1.5 1.5 0 1 0 3 0a1.5 1.5 0 1 0 -3 0M825.6 477.9a1.5 1.5 0 1 0 3 0a1.5 1.5 0 1 0 -3 0M825.6 507.2a1.5 1.5 0 1 0 3 0a1.5 1.5 0 1 0 -3 0M825.6 516.8a1.5 1.5 0 1 0 3 0a1.5 1.5 0 1 0 -3 0M825.6 526.5a1.5 1.5 0 1 0 3 0a1.5 1.5 0 1 0 -3 0M825.6 536.1a1.5 1.5 0 1 0 3 0a1.5 1.5 0 1 0 -3 0M825.6 545.8a1.5 1.5 0 1 0 3 0a1.5 1.5 0 1 0 -3 0M825.6 574.9a1.5 1.5 0 1 0 3 0a1.5 1.5 0 1 0 -3 0M825.6 584.6a1.5 1.5 0 1 0 3 0a1.5 1.5 0 1 0 -3 0M835.3 400.8a1.5 1.5 0 1 0 3 0a1.5 1.5 0 1 0 -3 0M835.3 410.3a1.5 1.5 0 1 0 3 0a1.5 1.5 0 1 0 -3 0M835.3 439.6a1.5 1.5 0 1 0 3 0a1.5 1.5 0 1 0 -3 0M835.3 449.1a1.5 1.5 0 1 0 3 0a1.5 1.5 0 1 0 -3 0M835.3 458.7a1.5 1.5 0 1 0 3 0a1.5 1.5 0 1 0 -3 0M835.3 468.3a1.5 1.5 0 1 0 3 0a1.5 1.5 0 1 0 -3 0M835.3 477.9a1.5 1.5 0 1 0 3 0a1.5 1.5 0 1 0 -3 0M835.3 507.2a1.5 1.5 0 1 0 3 0a1.5 1.5 0 1 0 -3 0M835.3 516.8a1.5 1.5 0 1 0 3 0a1.5 1.5 0 1 0 -3 0M835.3 526.5a1.5 1.5 0 1 0 3 0a1.5 1.5 0 1 0 -3 0M835.3 536.1a1.5 1.5 0 1 0 3 0a1.5 1.5 0 1 0 -3 0M835.3 545.8a1.5 1.5 0 1 0 3 0a1.5 1.5 0 1 0 -3 0M835.3 574.9a1.5 1.5 0 1 0 3 0a1.5 1.5 0 1 0 -3 0M835.3 584.6a1.5 1.5 0 1 0 3 0a1.5 1.5 0 1 0 -3 0M845.0 400.8a1.5 1.5 0 1 0 3 0a1.5 1.5 0 1 0 -3 0M845.0 410.3a1.5 1.5 0 1 0 3 0a1.5 1.5 0 1 0 -3 0M845.0 439.6a1.5 1.5 0 1 0 3 0a1.5 1.5 0 1 0 -3 0M845.0 449.1a1.5 1.5 0 1 0 3 0a1.5 1.5 0 1 0 -3 0M845.0 458.7a1.5 1.5 0 1 0 3 0a1.5 1.5 0 1 0 -3 0M845.0 468.3a1.5 1.5 0 1 0 3 0a1.5 1.5 0 1 0 -3 0M845.0 477.9a1.5 1.5 0 1 0 3 0a1.5 1.5 0 1 0 -3 0M845.0 507.2a1.5 1.5 0 1 0 3 0a1.5 1.5 0 1 0 -3 0M845.0 516.8a1.5 1.5 0 1 0 3 0a1.5 1.5 0 1 0 -3 0M845.0 526.5a1.5 1.5 0 1 0 3 0a1.5 1.5 0 1 0 -3 0M845.0 536.1a1.5 1.5 0 1 0 3 0a1.5 1.5 0 1 0 -3 0M845.0 545.8a1.5 1.5 0 1 0 3 0a1.5 1.5 0 1 0 -3 0M845.0 574.9a1.5 1.5 0 1 0 3 0a1.5 1.5 0 1 0 -3 0M845.0 584.6a1.5 1.5 0 1 0 3 0a1.5 1.5 0 1 0 -3 0M854.6 400.8a1.5 1.5 0 1 0 3 0a1.5 1.5 0 1 0 -3 0M854.6 410.3a1.5 1.5 0 1 0 3 0a1.5 1.5 0 1 0 -3 0M854.6 439.6a1.5 1.5 0 1 0 3 0a1.5 1.5 0 1 0 -3 0M854.6 449.1a1.5 1.5 0 1 0 3 0a1.5 1.5 0 1 0 -3 0M854.6 458.7a1.5 1.5 0 1 0 3 0a1.5 1.5 0 1 0 -3 0M854.6 468.3a1.5 1.5 0 1 0 3 0a1.5 1.5 0 1 0 -3 0M854.6 477.9a1.5 1.5 0 1 0 3 0a1.5 1.5 0 1 0 -3 0M854.6 507.2a1.5 1.5 0 1 0 3 0a1.5 1.5 0 1 0 -3 0M854.6 516.8a1.5 1.5 0 1 0 3 0a1.5 1.5 0 1 0 -3 0M854.6 526.5a1.5 1.5 0 1 0 3 0a1.5 1.5 0 1 0 -3 0M854.6 536.1a1.5 1.5 0 1 0 3 0a1.5 1.5 0 1 0 -3 0M854.6 545.8a1.5 1.5 0 1 0 3 0a1.5 1.5 0 1 0 -3 0M854.6 574.9a1.5 1.5 0 1 0 3 0a1.5 1.5 0 1 0 -3 0M854.6 584.6a1.5 1.5 0 1 0 3 0a1.5 1.5 0 1 0 -3 0M864.3 400.8a1.5 1.5 0 1 0 3 0a1.5 1.5 0 1 0 -3 0M864.3 410.3a1.5 1.5 0 1 0 3 0a1.5 1.5 0 1 0 -3 0M864.3 439.6a1.5 1.5 0 1 0 3 0a1.5 1.5 0 1 0 -3 0M864.3 449.1a1.5 1.5 0 1 0 3 0a1.5 1.5 0 1 0 -3 0M864.3 458.7a1.5 1.5 0 1 0 3 0a1.5 1.5 0 1 0 -3 0M864.3 468.3a1.5 1.5 0 1 0 3 0a1.5 1.5 0 1 0 -3 0M864.3 477.9a1.5 1.5 0 1 0 3 0a1.5 1.5 0 1 0 -3 0M864.3 507.2a1.5 1.5 0 1 0 3 0a1.5 1.5 0 1 0 -3 0M864.3 516.8a1.5 1.5 0 1 0 3 0a1.5 1.5 0 1 0 -3 0M864.3 526.5a1.5 1.5 0 1 0 3 0a1.5 1.5 0 1 0 -3 0M864.3 536.1a1.5 1.5 0 1 0 3 0a1.5 1.5 0 1 0 -3 0M864.3 545.8a1.5 1.5 0 1 0 3 0a1.5 1.5 0 1 0 -3 0M864.3 574.9a1.5 1.5 0 1 0 3 0a1.5 1.5 0 1 0 -3 0M864.3 584.6a1.5 1.5 0 1 0 3 0a1.5 1.5 0 1 0 -3 0M874.0 400.8a1.5 1.5 0 1 0 3 0a1.5 1.5 0 1 0 -3 0M874.0 410.3a1.5 1.5 0 1 0 3 0a1.5 1.5 0 1 0 -3 0M874.0 439.6a1.5 1.5 0 1 0 3 0a1.5 1.5 0 1 0 -3 0M874.0 449.1a1.5 1.5 0 1 0 3 0a1.5 1.5 0 1 0 -3 0M874.0 458.7a1.5 1.5 0 1 0 3 0a1.5 1.5 0 1 0 -3 0M874.0 468.3a1.5 1.5 0 1 0 3 0a1.5 1.5 0 1 0 -3 0M874.0 477.9a1.5 1.5 0 1 0 3 0a1.5 1.5 0 1 0 -3 0M874.0 507.2a1.5 1.5 0 1 0 3 0a1.5 1.5 0 1 0 -3 0M874.0 516.8a1.5 1.5 0 1 0 3 0a1.5 1.5 0 1 0 -3 0M874.0 526.5a1.5 1.5 0 1 0 3 0a1.5 1.5 0 1 0 -3 0M874.0 536.1a1.5 1.5 0 1 0 3 0a1.5 1.5 0 1 0 -3 0M874.0 545.8a1.5 1.5 0 1 0 3 0a1.5 1.5 0 1 0 -3 0M874.0 574.9a1.5 1.5 0 1 0 3 0a1.5 1.5 0 1 0 -3 0M874.0 584.6a1.5 1.5 0 1 0 3 0a1.5 1.5 0 1 0 -3 0M883.6 400.8a1.5 1.5 0 1 0 3 0a1.5 1.5 0 1 0 -3 0M883.6 410.3a1.5 1.5 0 1 0 3 0a1.5 1.5 0 1 0 -3 0M883.6 439.6a1.5 1.5 0 1 0 3 0a1.5 1.5 0 1 0 -3 0M883.6 449.1a1.5 1.5 0 1 0 3 0a1.5 1.5 0 1 0 -3 0M883.6 458.7a1.5 1.5 0 1 0 3 0a1.5 1.5 0 1 0 -3 0M883.6 468.3a1.5 1.5 0 1 0 3 0a1.5 1.5 0 1 0 -3 0M883.6 477.9a1.5 1.5 0 1 0 3 0a1.5 1.5 0 1 0 -3 0M883.6 507.2a1.5 1.5 0 1 0 3 0a1.5 1.5 0 1 0 -3 0M883.6 516.8a1.5 1.5 0 1 0 3 0a1.5 1.5 0 1 0 -3 0M883.6 526.5a1.5 1.5 0 1 0 3 0a1.5 1.5 0 1 0 -3 0M883.6 536.1a1.5 1.5 0 1 0 3 0a1.5 1.5 0 1 0 -3 0M883.6 545.8a1.5 1.5 0 1 0 3 0a1.5 1.5 0 1 0 -3 0M883.6 574.9a1.5 1.5 0 1 0 3 0a1.5 1.5 0 1 0 -3 0M883.6 584.6a1.5 1.5 0 1 0 3 0a1.5 1.5 0 1 0 -3 0" fill="#2e2e2e"/>
<g font-family="Liberation Sans" font-size="6.2" fill="#707070">
<text transform="translate(606.9,430.6) rotate(-90)" text-anchor="middle">1</text>
<text transform="translate(606.9,554.2) rotate(-90)" text-anchor="middle">1</text>
<text transform="translate(616.6,430.6) rotate(-90)" text-anchor="middle">2</text>
<text transform="translate(616.6,554.2) rotate(-90)" text-anchor="middle">2</text>
<text transform="translate(626.2,430.6) rotate(-90)" text-anchor="middle">3</text>
<text transform="translate(626.2,554.2) rotate(-90)" text-anchor="middle">3</text>
<text transform="translate(635.9,430.6) rotate(-90)" text-anchor="middle">4</text>
<text transform="translate(635.9,554.2) rotate(-90)" text-anchor="middle">4</text>
<text transform="translate(645.6,430.6) rotate(-90)" text-anchor="middle">5</text>
<text transform="translate(645.6,554.2) rotate(-90)" text-anchor="middle">5</text>
<text transform="translate(655.3,430.6) rotate(-90)" text-anchor="middle">6</text>
<text transform="translate(655.3,554.2) rotate(-90)" text-anchor="middle">6</text>
<text transform="translate(664.9,430.6) rotate(-90)" text-anchor="middle">7</text>
<text transform="translate(664.9,554.2) rotate(-90)" text-anchor="middle">7</text>
<text transform="translate(674.6,430.6) rotate(-90)" text-anchor="middle">8</text>
<text transform="translate(674.6,554.2) rotate(-90)" text-anchor="middle">8</text>
<text transform="translate(684.3,430.6) rotate(-90)" text-anchor="middle">9</text>
<text transform="translate(684.3,554.2) rotate(-90)" text-anchor="middle">9</text>
<text transform="translate(693.9,430.6) rotate(-90)" text-anchor="middle">10</text>
<text transform="translate(693.9,554.2) rotate(-90)" text-anchor="middle">10</text>
<text transform="translate(703.6,430.6) rotate(-90)" text-anchor="middle">11</text>
<text transform="translate(703.6,554.2) rotate(-90)" text-anchor="middle">11</text>
<text transform="translate(713.3,430.6) rotate(-90)" text-anchor="middle">12</text>
<text transform="translate(713.3,554.2) rotate(-90)" text-anchor="middle">12</text>
<text transform="translate(722.9,430.6) rotate(-90)" text-anchor="middle">13</text>
<text transform="translate(722.9,554.2) rotate(-90)" text-anchor="middle">13</text>
<text transform="translate(732.6,430.6) rotate(-90)" text-anchor="middle">14</text>
<text transform="translate(732.6,554.2) rotate(-90)" text-anchor="middle">14</text>
<text transform="translate(742.3,430.6) rotate(-90)" text-anchor="middle">15</text>
<text transform="translate(742.3,554.2) rotate(-90)" text-anchor="middle">15</text>
<text transform="translate(752.0,430.6) rotate(-90)" text-anchor="middle">16</text>
<text transform="translate(752.0,554.2) rotate(-90)" text-anchor="middle">16</text>
<text transform="translate(761.6,430.6) rotate(-90)" text-anchor="middle">17</text>
<text transform="translate(761.6,554.2) rotate(-90)" text-anchor="middle">17</text>
<text transform="translate(771.3,430.6) rotate(-90)" text-anchor="middle">18</text>
<text transform="translate(771.3,554.2) rotate(-90)" text-anchor="middle">18</text>
<text transform="translate(781.0,430.6) rotate(-90)" text-anchor="middle">19</text>
<text transform="translate(781.0,554.2) rotate(-90)" text-anchor="middle">19</text>
<text transform="translate(790.6,430.6) rotate(-90)" text-anchor="middle">20</text>
<text transform="translate(790.6,554.2) rotate(-90)" text-anchor="middle">20</text>
<text transform="translate(800.3,430.6) rotate(-90)" text-anchor="middle">21</text>
<text transform="translate(800.3,554.2) rotate(-90)" text-anchor="middle">21</text>
<text transform="translate(810.0,430.6) rotate(-90)" text-anchor="middle">22</text>
<text transform="translate(810.0,554.2) rotate(-90)" text-anchor="middle">22</text>
<text transform="translate(819.6,430.6) rotate(-90)" text-anchor="middle">23</text>
<text transform="translate(819.6,554.2) rotate(-90)" text-anchor="middle">23</text>
<text transform="translate(829.3,430.6) rotate(-90)" text-anchor="middle">24</text>
<text transform="translate(829.3,554.2) rotate(-90)" text-anchor="middle">24</text>
<text transform="translate(839.0,430.6) rotate(-90)" text-anchor="middle">25</text>
<text transform="translate(839.0,554.2) rotate(-90)" text-anchor="middle">25</text>
<text transform="translate(848.7,430.6) rotate(-90)" text-anchor="middle">26</text>
<text transform="translate(848.7,554.2) rotate(-90)" text-anchor="middle">26</text>
<text transform="translate(858.3,430.6) rotate(-90)" text-anchor="middle">27</text>
<text transform="translate(858.3,554.2) rotate(-90)" text-anchor="middle">27</text>
<text transform="translate(868.0,430.6) rotate(-90)" text-anchor="middle">28</text>
<text transform="translate(868.0,554.2) rotate(-90)" text-anchor="middle">28</text>
<text transform="translate(877.7,430.6) rotate(-90)" text-anchor="middle">29</text>
<text transform="translate(877.7,554.2) rotate(-90)" text-anchor="middle">29</text>
<text transform="translate(887.3,430.6) rotate(-90)" text-anchor="middle">30</text>
<text transform="translate(887.3,554.2) rotate(-90)" text-anchor="middle">30</text>
</g>
<g font-family="Liberation Sans" font-size="7.6" fill="#666">
<text transform="translate(597.2,439.6) rotate(-90)" text-anchor="middle">j</text>
<text transform="translate(898.3,439.6) rotate(-90)" text-anchor="middle">j</text>
<text transform="translate(597.2,449.1) rotate(-90)" text-anchor="middle">i</text>
<text transform="translate(898.3,449.1) rotate(-90)" text-anchor="middle">i</text>
<text transform="translate(597.2,458.7) rotate(-90)" text-anchor="middle">h</text>
<text transform="translate(898.3,458.7) rotate(-90)" text-anchor="middle">h</text>
<text transform="translate(597.2,468.3) rotate(-90)" text-anchor="middle">g</text>
<text transform="translate(898.3,468.3) rotate(-90)" text-anchor="middle">g</text>
<text transform="translate(597.2,477.9) rotate(-90)" text-anchor="middle">f</text>
<text transform="translate(898.3,477.9) rotate(-90)" text-anchor="middle">f</text>
<text transform="translate(597.2,507.2) rotate(-90)" text-anchor="middle">e</text>
<text transform="translate(898.3,507.2) rotate(-90)" text-anchor="middle">e</text>
<text transform="translate(597.2,516.8) rotate(-90)" text-anchor="middle">d</text>
<text transform="translate(898.3,516.8) rotate(-90)" text-anchor="middle">d</text>
<text transform="translate(597.2,526.5) rotate(-90)" text-anchor="middle">c</text>
<text transform="translate(898.3,526.5) rotate(-90)" text-anchor="middle">c</text>
<text transform="translate(597.2,536.1) rotate(-90)" text-anchor="middle">b</text>
<text transform="translate(898.3,536.1) rotate(-90)" text-anchor="middle">b</text>
<text transform="translate(597.2,545.8) rotate(-90)" text-anchor="middle">a</text>
<text transform="translate(898.3,545.8) rotate(-90)" text-anchor="middle">a</text>
</g>
<g stroke="#c8282a" stroke-width="1.1"><path d="M589.8 414.4h5.8M592.7 411.9v5M892.8 414.4h5.8M895.7 411.9v5M589.8 588h5.8M592.7 585.5v5M892.8 588h5.8M895.7 585.5v5"/></g>
<g stroke="#777" stroke-width="1"><path d="M592.8 393.5v5M895.75 393.5v5M592.8 568v5M895.75 568v5"/></g>
<g fill="#8a8a8a">
<path d="M369.4 233.8h6l-1.5-2.5h-1l-0.5-2.6l-0.5 2.6h-1z"/><path d="M369.4 255h6l-1.5 2.5h-1l-0.5 2.6l-0.5-2.6h-1z"/>
<path d="M379.0 233.8h6l-1.5-2.5h-1l-0.5-2.6l-0.5 2.6h-1z"/><path d="M379.0 255h6l-1.5 2.5h-1l-0.5 2.6l-0.5-2.6h-1z"/>
<path d="M388.7 233.8h6l-1.5-2.5h-1l-0.5-2.6l-0.5 2.6h-1z"/><path d="M388.7 255h6l-1.5 2.5h-1l-0.5 2.6l-0.5-2.6h-1z"/>
<path d="M398.3 233.8h6l-1.5-2.5h-1l-0.5-2.6l-0.5 2.6h-1z"/><path d="M398.3 255h6l-1.5 2.5h-1l-0.5 2.6l-0.5-2.6h-1z"/>
<path d="M407.9 233.8h6l-1.5-2.5h-1l-0.5-2.6l-0.5 2.6h-1z"/><path d="M407.9 255h6l-1.5 2.5h-1l-0.5 2.6l-0.5-2.6h-1z"/>
<path d="M417.5 233.8h6l-1.5-2.5h-1l-0.5-2.6l-0.5 2.6h-1z"/><path d="M417.5 255h6l-1.5 2.5h-1l-0.5 2.6l-0.5-2.6h-1z"/>
<path d="M427.2 233.8h6l-1.5-2.5h-1l-0.5-2.6l-0.5 2.6h-1z"/><path d="M427.2 255h6l-1.5 2.5h-1l-0.5 2.6l-0.5-2.6h-1z"/>
<path d="M436.8 233.8h6l-1.5-2.5h-1l-0.5-2.6l-0.5 2.6h-1z"/><path d="M436.8 255h6l-1.5 2.5h-1l-0.5 2.6l-0.5-2.6h-1z"/>
</g>
<rect x="366.6" y="234.1" width="79.1" height="20.7" rx="1.5" fill="#333"/>
<path d="M366.6 242a2.6 2.6 0 0 1 0 5.2z" fill="#1e1e1e"/><circle cx="372.1" cy="251.8" r="0.9" fill="#e8e8e8"/>
<text x="405.6" y="247.6" font-family="Liberation Sans" font-size="8.5" fill="#e6e6e6" text-anchor="middle" letter-spacing="0.3">L293D</text>
<clipPath id="mclip"><rect x="660" y="184.4" width="110" height="69.4" rx="6"/></clipPath>
<g clip-path="url(#mclip)"><circle cx="711.7" cy="219.1" r="45.8" fill="#bdbdbd"/><circle cx="711.7" cy="219.1" r="44" fill="#c6c6c6"/></g>
<path d="M690 184.4h43M690 253.8h43" stroke="#bdbdbd" stroke-width="1.2"/>
<circle cx="711.7" cy="196.5" r="5" fill="#6b6b6b"/><circle cx="686.6" cy="219.1" r="5.8" fill="#6b6b6b"/><circle cx="737.1" cy="219.1" r="5.8" fill="#6b6b6b"/>
<circle cx="711.7" cy="219.1" r="11.2" fill="#e6c83a"/><circle cx="711.70" cy="207.10" r="2.5" fill="#e6c83a"/><circle cx="717.70" cy="208.71" r="2.5" fill="#e6c83a"/><circle cx="722.09" cy="213.10" r="2.5" fill="#e6c83a"/><circle cx="723.70" cy="219.10" r="2.5" fill="#e6c83a"/><circle cx="722.09" cy="225.10" r="2.5" fill="#e6c83a"/><circle cx="717.70" cy="229.49" r="2.5" fill="#e6c83a"/><circle cx="711.70" cy="231.10" r="2.5" fill="#e6c83a"/><circle cx="705.70" cy="229.49" r="2.5" fill="#e6c83a"/><circle cx="701.31" cy="225.10" r="2.5" fill="#e6c83a"/><circle cx="699.70" cy="219.10" r="2.5" fill="#e6c83a"/><circle cx="701.31" cy="213.10" r="2.5" fill="#e6c83a"/><circle cx="705.70" cy="208.71" r="2.5" fill="#e6c83a"/>
<circle cx="711.7" cy="219.1" r="5.6" fill="#d3c07a"/>
<text x="712" y="244.5" font-family="Liberation Sans" font-size="6.3" fill="#4a4a4a" text-anchor="middle">9393 rpm</text>
<rect x="699.5" y="253.8" width="5" height="6" rx="1" fill="#222"/><rect x="719" y="253.8" width="5" height="6" rx="1" fill="#c8201e"/>
<path d="M372.4 230 L371.2 216 Q370.8 208 379 207.7 L508 213.2 Q514 213.5 518.5 221 L624.3 410.3" fill="none" stroke="#e3262a" stroke-width="2.5" stroke-linecap="round" stroke-linejoin="round"/>
<path d="M439.8 259 L604.7 410.3" fill="none" stroke="#e3262a" stroke-width="2.5" stroke-linecap="round" stroke-linejoin="round"/>
<path d="M372.4 259 L370.8 395.4" fill="none" stroke="#3ab54a" stroke-width="2.5" stroke-linecap="round" stroke-linejoin="round"/>
<path d="M382 259 L380.5 395.4" fill="none" stroke="#3ab54a" stroke-width="2.5" stroke-linecap="round" stroke-linejoin="round"/>
<path d="M430.2 259 L389.9 395.4" fill="none" stroke="#3ab54a" stroke-width="2.5" stroke-linecap="round" stroke-linejoin="round"/>
<path d="M391.6 259 L390 307 Q390 315.5 398 315.5 L703 320.5 Q715.5 320.6 716.3 309 L721.4 259" fill="none" stroke="#3ab54a" stroke-width="2.5" stroke-linecap="round" stroke-linejoin="round"/>
<path d="M420.6 259 L419.8 294 Q419.8 301.4 428 301.6 L691 313.3 Q700.8 313.5 701 304 L702 259" fill="none" stroke="#3ab54a" stroke-width="2.5" stroke-linecap="round" stroke-linejoin="round"/>
<path d="M401.3 259 L399.9 362 Q400 370 408.5 370.3 L598 381.2 Q612.5 382 614.5 400.8" fill="none" stroke="#333333" stroke-width="2.5" stroke-linecap="round" stroke-linejoin="round"/>
<path d="M410.9 259 L409.9 346.6 Q410 356 418.5 356.5 L612 382 Q628 384 633.7 400.8" fill="none" stroke="#333333" stroke-width="2.5" stroke-linecap="round" stroke-linejoin="round"/>
<path d="M351.1 395.4 V334.4 Q351.1 326.1 360 326.1 L644.4 326.1 Q654.5 326.3 655 335.5 L662.7 439.6" fill="none" stroke="#f5870f" stroke-width="2.5" stroke-linecap="round" stroke-linejoin="round"/>
<path d="M360.9 395.4 V347.7 Q360.9 338.6 369.4 338.6 L664.4 338.3 Q674 338.5 674.4 347.7 L682 439.6" fill="none" stroke="#fad500" stroke-width="2.5" stroke-linecap="round" stroke-linejoin="round"/>
<path d="M424.9 395.4 V359 Q425 350.6 433.2 350.6 L712.1 350.8 Q721.5 351 722 358.8 L730.4 468.3" fill="none" stroke="#3ab54a" stroke-width="2.5" stroke-linecap="round" stroke-linejoin="round"/>
<path d="M434.3 395.4 V370 Q434.3 361.4 442 361.4 L722 361.3 Q731.5 361.5 732 368.8 L740.1 468.3" fill="none" stroke="#6ac3d6" stroke-width="2.5" stroke-linecap="round" stroke-linejoin="round"/>
<path d="M444.3 395.4 V378 Q444.3 369.4 452 369.4 L733.2 369.3 Q741.5 369.6 742 377.7 L749.8 468.3" fill="none" stroke="#1898d5" stroke-width="2.5" stroke-linecap="round" stroke-linejoin="round"/>
<path d="M453.7 395.4 V385.4 Q453.7 377.1 461 377.1 L744.3 377.3 Q751.5 377.6 752 386.5 L759.4 468.3" fill="none" stroke="#7b3a9c" stroke-width="2.5" stroke-linecap="round" stroke-linejoin="round"/>
<path d="M662.7 477.9 L658.1 671.4" fill="none" stroke="#f5870f" stroke-width="2.5" stroke-linecap="round" stroke-linejoin="round"/>
<path d="M682 477.9 L677.5 671.4" fill="none" stroke="#fad500" stroke-width="2.5" stroke-linecap="round" stroke-linejoin="round"/>
<path d="M730.4 477.9 L725.9 671.4" fill="none" stroke="#3ab54a" stroke-width="2.5" stroke-linecap="round" stroke-linejoin="round"/>
<path d="M740.1 477.9 L735.6 671.4" fill="none" stroke="#6ac3d6" stroke-width="2.5" stroke-linecap="round" stroke-linejoin="round"/>
<path d="M749.8 477.9 L745.3 671.4" fill="none" stroke="#1898d5" stroke-width="2.5" stroke-linecap="round" stroke-linejoin="round"/>
<path d="M759.4 477.9 L755.0 671.4" fill="none" stroke="#7b3a9c" stroke-width="2.5" stroke-linecap="round" stroke-linejoin="round"/>
<path d="M778.8 458.7 L764.7 671.4" fill="none" stroke="#a56f3b" stroke-width="2.5" stroke-linecap="round" stroke-linejoin="round"/>
<path d="M778.8 574.9 L774.4 671.4" fill="none" stroke="#333333" stroke-width="2.5" stroke-linecap="round" stroke-linejoin="round"/>
<path d="M633.8 526.5 L629.0 671.4" fill="none" stroke="#333333" stroke-width="2.5" stroke-linecap="round" stroke-linejoin="round"/>
<path d="M643.4 584.6 L638.7 671.4" fill="none" stroke="#e3262a" stroke-width="2.5" stroke-linecap="round" stroke-linejoin="round"/>
<path d="M624.3 545.8 L639.7 545.3 Q646.3 545.5 646.5 553 L648.4 671.4" fill="none" stroke="#d3369c" stroke-width="2.5" stroke-linecap="round" stroke-linejoin="round"/>
<path d="M672.4 574.9 L667.8 671.4" fill="none" stroke="#333333" stroke-width="2.5" stroke-linecap="round" stroke-linejoin="round"/>
<path d="M376.5 578.5 C440 534 500 492 532 464.5 Q537.5 458.8 544 458.8 L827.8 458.8" fill="none" stroke="#878b8f" stroke-width="2.8" stroke-linecap="round" stroke-linejoin="round"/>
<path d="M433.3 578.4 L548.5 476.5 Q552 473.2 558 473 L836.8 468.5" fill="none" stroke="#6ac3d6" stroke-width="2.5" stroke-linecap="round" stroke-linejoin="round"/>
<path d="M386.6 578 V566 Q386.8 559.2 394 559.2 L584 559 Q596 559.3 604.8 574.9" fill="none" stroke="#333333" stroke-width="2.5" stroke-linecap="round" stroke-linejoin="round"/>
<path d="M376.5 578.8 V586 Q377 593.3 386 593.3 L584 593.3 Q597 593 604.8 584.6" fill="none" stroke="#e3262a" stroke-width="2.5" stroke-linecap="round" stroke-linejoin="round"/>
<path d="M614.4 545.8 V584.6" fill="none" stroke="#e3262a" stroke-width="2.5" stroke-linecap="round" stroke-linejoin="round"/>
<path d="M405.6 395.4 V629 Q405.8 637.8 415.3 637.8 L838.7 637.8 Q849.5 637.5 849.7 628.8 L856.3 506.4" fill="none" stroke="#fad500" stroke-width="2.5" stroke-linecap="round" stroke-linejoin="round"/>
<path d="M846.5 449.1 L865.8 400.8" fill="none" stroke="#7b3a9c" stroke-width="2.5" stroke-linecap="round" stroke-linejoin="round"/>
<path d="M875.4 400.8 V574.9" fill="none" stroke="#333333" stroke-width="2.5" stroke-linecap="round" stroke-linejoin="round"/>
<path d="M885.1 410.3 V584.6" fill="none" stroke="#e3262a" stroke-width="2.5" stroke-linecap="round" stroke-linejoin="round"/>
<path d="M846.4 507 V536.2" fill="none" stroke="#3ab54a" stroke-width="2.5" stroke-linecap="round" stroke-linejoin="round"/>
<rect x="808" y="382.7" width="57.8" height="8.4" rx="4.2" fill="#fff" stroke="#333" stroke-width="1.3"/>
<circle cx="836.3" cy="386.6" r="7" fill="#333"/>
<text x="836.3" y="388.5" font-family="Liberation Sans" font-size="4.5" fill="#ddd" text-anchor="middle">39°C</text>
<path d="M791.0999999999999 386.5V378a2.2 2.2 0 0 1 4.4 0v8.5a4.6 4.6 0 1 1 -4.4 0z" fill="#fff" stroke="#333" stroke-width="1.3"/><circle cx="793.3" cy="390.9" r="2.5" fill="#333"/>
<path d="M878.3 386.5V378a2.2 2.2 0 0 1 4.4 0v8.5a4.6 4.6 0 1 1 -4.4 0z" fill="#fff" stroke="#333" stroke-width="1.3"/><circle cx="880.5" cy="390.9" r="2.5" fill="#333"/>
<path d="M778.8 410.3V449.1" stroke="#888" stroke-width="1.2"/>
<path d="M775.2 418.5q3.6-3 7.2 0v22q-3.6 3-7.2 0z" fill="#e3c48b"/>
<rect x="775" y="422.5" width="7.6" height="2.4" fill="#e0231e"/><rect x="775" y="427" width="7.6" height="2.4" fill="#e0231e"/><rect x="775" y="431.5" width="7.6" height="2.4" fill="#8a4a1a"/><rect x="775" y="436" width="7.6" height="1.8" fill="#c9a24a"/>
<path d="M846.4 536.2V574.9" stroke="#888" stroke-width="1.2"/>
<path d="M842.8 543.5q3.6-3 7.2 0v22q-3.6 3-7.2 0z" fill="#e3c48b"/>
<rect x="842.6" y="546" width="7.6" height="1.8" fill="#c9a24a"/><rect x="842.6" y="552.5" width="7.6" height="2.4" fill="#e0231e"/><rect x="842.6" y="557.6" width="7.6" height="2.4" fill="#222"/><rect x="842.6" y="562.2" width="7.6" height="2.4" fill="#8a4a1a"/>
<path d="M830.6 431.5Q826.9 434.5 827.2 440.3M836.9 431v9.3M843.2 431.5Q846.9 434.5 846.7 440.3" stroke="#3b95d8" stroke-width="2.3" fill="none"/>
<path d="M825.3 409.5q0-7.2 11.6-7.2t11.6 7.2v22h-23.2z" fill="#333" stroke="#3b95d8" stroke-width="2.3"/>
<rect x="827.2" y="410" width="19.4" height="20.5" fill="#2c2c2c" stroke="#4a4a4a" stroke-width="0.7"/>
<text x="837" y="423.4" font-family="Liberation Sans" font-size="8.2" fill="#e4e4e4" text-anchor="middle">TMP</text>
<path d="M846.4 500v7M856.3 500v7" stroke="#8c8c8c" stroke-width="1.4"/>
<path d="M843.5 500.9v-13.5a7 7 0 0 1 14 0v13.5z" fill="#3c93d2"/><rect x="842.5" y="495.5" width="16" height="5.4" rx="1.5" fill="#2a6e9e"/>
<path d="M618 517.5Q614.2 521 614.4 526.5M624.3 517.5V526.5M630.8 517.5Q634.4 521 633.8 526.5" stroke="#8a8a8a" stroke-width="1.4" fill="none"/>
<path d="M613.1 497q0-7 11.3-7t11.3 7v21h-22.6z" fill="#353535"/><rect x="614.9" y="497.2" width="19" height="19.5" fill="#2f2f2f" stroke="#505050" stroke-width="0.7"/>
<text x="624.4" y="509.3" font-family="Liberation Sans" font-size="10.5" font-weight="bold" fill="#eee" text-anchor="middle">N</text>
<text x="624.4" y="514.8" font-family="Liberation Sans" font-size="3.5" fill="#777" text-anchor="middle" letter-spacing="1.5">C B E</text>
<rect x="602.6" y="666.5" width="304.4" height="136.5" rx="2" fill="#52a36a"/>
<circle cx="611" cy="674.7" r="4.9" fill="#fff"/>
<circle cx="898.4" cy="674.7" r="4.9" fill="#fff"/>
<circle cx="611" cy="794.7" r="4.9" fill="#fff"/>
<circle cx="898.4" cy="794.7" r="4.9" fill="#fff"/>
<rect x="621" y="689" width="269.6" height="96" fill="#3f8a55"/>
<rect x="619.2" y="686.9" width="270.6" height="95.6" rx="1" fill="#333"/>
<rect x="628.9" y="704.2" width="251.9" height="61" rx="2" fill="#3a5eb0"/>
<circle cx="629.0" cy="671.4" r="3.1" fill="#f4eedf" stroke="#d8c79e" stroke-width="1.4"/>
<circle cx="629.0" cy="671.4" r="1.5" fill="#333333"/>
<circle cx="638.7" cy="671.4" r="3.1" fill="#f4eedf" stroke="#d8c79e" stroke-width="1.4"/>
<circle cx="638.7" cy="671.4" r="1.5" fill="#e3262a"/>
<circle cx="648.4" cy="671.4" r="3.1" fill="#f4eedf" stroke="#d8c79e" stroke-width="1.4"/>
<circle cx="648.4" cy="671.4" r="1.5" fill="#d3369c"/>
<circle cx="658.1" cy="671.4" r="3.1" fill="#f4eedf" stroke="#d8c79e" stroke-width="1.4"/>
<circle cx="658.1" cy="671.4" r="1.5" fill="#f5870f"/>
<circle cx="667.8" cy="671.4" r="3.1" fill="#f4eedf" stroke="#d8c79e" stroke-width="1.4"/>
<circle cx="667.8" cy="671.4" r="1.5" fill="#333333"/>
<circle cx="677.5" cy="671.4" r="3.1" fill="#f4eedf" stroke="#d8c79e" stroke-width="1.4"/>
<circle cx="677.5" cy="671.4" r="1.5" fill="#fad500"/>
<circle cx="687.1" cy="671.4" r="3.1" fill="#f4eedf" stroke="#d8c79e" stroke-width="1.4"/>
<circle cx="696.8" cy="671.4" r="3.1" fill="#f4eedf" stroke="#d8c79e" stroke-width="1.4"/>
<circle cx="706.5" cy="671.4" r="3.1" fill="#f4eedf" stroke="#d8c79e" stroke-width="1.4"/>
<circle cx="716.2" cy="671.4" r="3.1" fill="#f4eedf" stroke="#d8c79e" stroke-width="1.4"/>
<circle cx="725.9" cy="671.4" r="3.1" fill="#f4eedf" stroke="#d8c79e" stroke-width="1.4"/>
<circle cx="725.9" cy="671.4" r="1.5" fill="#3ab54a"/>
<circle cx="735.6" cy="671.4" r="3.1" fill="#f4eedf" stroke="#d8c79e" stroke-width="1.4"/>
<circle cx="735.6" cy="671.4" r="1.5" fill="#6ac3d6"/>
<circle cx="745.3" cy="671.4" r="3.1" fill="#f4eedf" stroke="#d8c79e" stroke-width="1.4"/>
<circle cx="745.3" cy="671.4" r="1.5" fill="#1898d5"/>
<circle cx="755.0" cy="671.4" r="3.1" fill="#f4eedf" stroke="#d8c79e" stroke-width="1.4"/>
<circle cx="755.0" cy="671.4" r="1.5" fill="#7b3a9c"/>
<circle cx="764.7" cy="671.4" r="3.1" fill="#f4eedf" stroke="#d8c79e" stroke-width="1.4"/>
<circle cx="764.7" cy="671.4" r="1.5" fill="#a56f3b"/>
<circle cx="774.4" cy="671.4" r="3.1" fill="#f4eedf" stroke="#d8c79e" stroke-width="1.4"/>
<circle cx="774.4" cy="671.4" r="1.5" fill="#333333"/>
<g font-family="Liberation Sans" font-size="4.4" fill="#e6f2e9" font-weight="bold">
<text transform="translate(627.0,675.8) rotate(90)">GND</text>
<text transform="translate(636.7,675.8) rotate(90)">VCC</text>
<text transform="translate(646.4,675.8) rotate(90)">V0</text>
<text transform="translate(656.1,675.8) rotate(90)">RS</text>
<text transform="translate(665.8,675.8) rotate(90)">RW</text>
<text transform="translate(675.5,675.8) rotate(90)">E</text>
<text transform="translate(685.1,675.8) rotate(90)">DB0</text>
<text transform="translate(694.8,675.8) rotate(90)">DB1</text>
<text transform="translate(704.5,675.8) rotate(90)">DB2</text>
<text transform="translate(714.2,675.8) rotate(90)">DB3</text>
<text transform="translate(723.9,675.8) rotate(90)">DB4</text>
<text transform="translate(733.6,675.8) rotate(90)">DB5</text>
<text transform="translate(743.3,675.8) rotate(90)">DB6</text>
<text transform="translate(753.0,675.8) rotate(90)">DB7</text>
<text transform="translate(762.7,675.8) rotate(90)">LED</text>
<text transform="translate(772.4,675.8) rotate(90)">LED</text>
</g>
<path d="M688.30 713.00h1.95v2h-1.95zM690.70 713.00h1.95v2h-1.95zM693.10 713.00h1.95v2h-1.95zM695.50 713.00h1.95v2h-1.95zM697.90 713.00h1.95v2h-1.95zM695.50 715.70h1.95v2h-1.95zM693.10 718.40h1.95v2h-1.95zM695.50 721.10h1.95v2h-1.95zM697.90 723.80h1.95v2h-1.95zM688.30 726.50h1.95v2h-1.95zM697.90 726.50h1.95v2h-1.95zM690.70 729.20h1.95v2h-1.95zM693.10 729.20h1.95v2h-1.95zM695.50 729.20h1.95v2h-1.95zM704.17 713.00h1.95v2h-1.95zM706.57 713.00h1.95v2h-1.95zM708.97 713.00h1.95v2h-1.95zM701.77 715.70h1.95v2h-1.95zM711.37 715.70h1.95v2h-1.95zM701.77 718.40h1.95v2h-1.95zM711.37 718.40h1.95v2h-1.95zM704.17 721.10h1.95v2h-1.95zM706.57 721.10h1.95v2h-1.95zM708.97 721.10h1.95v2h-1.95zM701.77 723.80h1.95v2h-1.95zM711.37 723.80h1.95v2h-1.95zM701.77 726.50h1.95v2h-1.95zM711.37 726.50h1.95v2h-1.95zM704.17 729.20h1.95v2h-1.95zM706.57 729.20h1.95v2h-1.95zM708.97 729.20h1.95v2h-1.95zM717.64 726.50h1.95v2h-1.95zM720.04 726.50h1.95v2h-1.95zM717.64 729.20h1.95v2h-1.95zM720.04 729.20h1.95v2h-1.95zM731.11 713.00h1.95v2h-1.95zM733.51 713.00h1.95v2h-1.95zM735.91 713.00h1.95v2h-1.95zM728.71 715.70h1.95v2h-1.95zM738.31 715.70h1.95v2h-1.95zM728.71 718.40h1.95v2h-1.95zM738.31 718.40h1.95v2h-1.95zM731.11 721.10h1.95v2h-1.95zM733.51 721.10h1.95v2h-1.95zM735.91 721.10h1.95v2h-1.95zM728.71 723.80h1.95v2h-1.95zM738.31 723.80h1.95v2h-1.95zM728.71 726.50h1.95v2h-1.95zM738.31 726.50h1.95v2h-1.95zM731.11 729.20h1.95v2h-1.95zM733.51 729.20h1.95v2h-1.95zM735.91 729.20h1.95v2h-1.95zM742.18 713.00h1.95v2h-1.95zM744.58 713.00h1.95v2h-1.95zM746.98 713.00h1.95v2h-1.95zM749.38 713.00h1.95v2h-1.95zM751.78 713.00h1.95v2h-1.95zM751.78 715.70h1.95v2h-1.95zM749.38 718.40h1.95v2h-1.95zM746.98 721.10h1.95v2h-1.95zM744.58 723.80h1.95v2h-1.95zM744.58 726.50h1.95v2h-1.95zM744.58 729.20h1.95v2h-1.95zM773.92 713.00h1.95v2h-1.95zM771.52 718.40h1.95v2h-1.95zM773.92 718.40h1.95v2h-1.95zM773.92 721.10h1.95v2h-1.95zM773.92 723.80h1.95v2h-1.95zM773.92 726.50h1.95v2h-1.95zM771.52 729.20h1.95v2h-1.95zM773.92 729.20h1.95v2h-1.95zM776.32 729.20h1.95v2h-1.95zM782.59 718.40h1.95v2h-1.95zM787.39 718.40h1.95v2h-1.95zM789.79 718.40h1.95v2h-1.95zM782.59 721.10h1.95v2h-1.95zM784.99 721.10h1.95v2h-1.95zM792.19 721.10h1.95v2h-1.95zM782.59 723.80h1.95v2h-1.95zM792.19 723.80h1.95v2h-1.95zM782.59 726.50h1.95v2h-1.95zM792.19 726.50h1.95v2h-1.95zM782.59 729.20h1.95v2h-1.95zM792.19 729.20h1.95v2h-1.95zM819.13 713.00h1.95v2h-1.95zM819.13 715.70h1.95v2h-1.95zM811.93 718.40h1.95v2h-1.95zM814.33 718.40h1.95v2h-1.95zM819.13 718.40h1.95v2h-1.95zM809.53 721.10h1.95v2h-1.95zM816.73 721.10h1.95v2h-1.95zM819.13 721.10h1.95v2h-1.95zM809.53 723.80h1.95v2h-1.95zM819.13 723.80h1.95v2h-1.95zM809.53 726.50h1.95v2h-1.95zM816.73 726.50h1.95v2h-1.95zM819.13 726.50h1.95v2h-1.95zM811.93 729.20h1.95v2h-1.95zM814.33 729.20h1.95v2h-1.95zM819.13 729.20h1.95v2h-1.95zM825.40 718.40h1.95v2h-1.95zM827.80 718.40h1.95v2h-1.95zM830.20 718.40h1.95v2h-1.95zM823.00 721.10h1.95v2h-1.95zM832.60 721.10h1.95v2h-1.95zM823.00 723.80h1.95v2h-1.95zM825.40 723.80h1.95v2h-1.95zM827.80 723.80h1.95v2h-1.95zM830.20 723.80h1.95v2h-1.95zM832.60 723.80h1.95v2h-1.95zM823.00 726.50h1.95v2h-1.95zM825.40 729.20h1.95v2h-1.95zM827.80 729.20h1.95v2h-1.95zM830.20 729.20h1.95v2h-1.95zM838.87 718.40h1.95v2h-1.95zM841.27 718.40h1.95v2h-1.95zM843.67 718.40h1.95v2h-1.95zM846.07 718.40h1.95v2h-1.95zM836.47 721.10h1.95v2h-1.95zM846.07 721.10h1.95v2h-1.95zM838.87 723.80h1.95v2h-1.95zM841.27 723.80h1.95v2h-1.95zM843.67 723.80h1.95v2h-1.95zM846.07 723.80h1.95v2h-1.95zM846.07 726.50h1.95v2h-1.95zM838.87 729.20h1.95v2h-1.95zM841.27 729.20h1.95v2h-1.95zM843.67 729.20h1.95v2h-1.95zM849.94 718.40h1.95v2h-1.95zM854.74 718.40h1.95v2h-1.95zM857.14 718.40h1.95v2h-1.95zM849.94 721.10h1.95v2h-1.95zM852.34 721.10h1.95v2h-1.95zM859.54 721.10h1.95v2h-1.95zM849.94 723.80h1.95v2h-1.95zM849.94 726.50h1.95v2h-1.95zM849.94 729.20h1.95v2h-1.95z" fill="#c5d0ea"/>
</svg>
<!--CANVAS_END-->
<!-- SIDEBAR -->
<div id="side" class="abs"></div>
<div class="abs" style="left:1005px;top:97px;width:257px;height:117px;background:#eff0f2"></div>
<svg class="abs" style="left:1004px;top:97px" width="258" height="720" viewBox="1004 97 258 720">
  
  <rect x="1011.5" y="106" width="213" height="44" rx="4" fill="#e3e5e9"/><rect x="1011.5" y="104.5" width="213" height="44" rx="4" fill="#f0f1f3" stroke="#dfe2e7"/>
  <path d="M1199.5 125.5h8l-4 4.5z" fill="#111"/>
  <rect x="1231" y="97" width="1" height="59" fill="#dfe2e7"/>
  <rect x="1005" y="156" width="257" height="1" fill="#dfe2e7"/>
  <g fill="#2c3e55">
    <rect x="1248" y="120" width="2.5" height="2.5"/><rect x="1248" y="125" width="2.5" height="2.5"/><rect x="1248" y="130" width="2.5" height="2.5"/>
    <rect x="1252" y="120" width="10" height="2.5"/><rect x="1252" y="125" width="10" height="2.5"/><rect x="1252" y="130" width="10" height="2.5"/>
  </g>
  <rect x="1015.5" y="167.5" width="260" height="36" fill="#fff" stroke="#dde1e6"/>
  <g fill="none" stroke="#d3d8de" stroke-width="2.6"><circle cx="1247" cy="183.5" r="5.8"/><path d="M1251.5 188l5 5" stroke-width="3" stroke-linecap="round"/></g>
  <!-- section lines -->
  <rect x="1011.5" y="586" width="246" height="1" fill="#dadde2"/>
  <rect x="1011.5" y="761" width="246" height="1" fill="#dadde2"/>
  <g fill="#f0f0f2">
    <rect x="1015" y="193.7" width="73.5" height="100" rx="6"/><rect x="1097" y="193.7" width="74.7" height="100" rx="6"/><rect x="1180.3" y="193.7" width="73.7" height="100" rx="6"/>
    <rect x="1015" y="306.4" width="73.5" height="100" rx="6"/><rect x="1097" y="306.4" width="74.7" height="100" rx="6"/><rect x="1180.3" y="306.4" width="73.7" height="100" rx="6"/>
    <rect x="1015" y="417.7" width="73.5" height="101" rx="6"/><rect x="1097" y="417.7" width="74.7" height="101" rx="6"/><rect x="1180.3" y="417.7" width="73.7" height="101" rx="6"/>
    <rect x="1015" y="593" width="73.5" height="100.5" rx="6"/><rect x="1097" y="593" width="74.7" height="100.5" rx="6"/>
    <rect x="1015" y="768" width="73.5" height="100" rx="6"/><rect x="1097" y="768" width="74.7" height="100" rx="6"/><rect x="1180.3" y="768" width="73.7" height="100" rx="6"/>
  </g>
  <rect x="1005" y="157" width="257" height="56.8" fill="#eff0f2"/>
  <rect x="1015.5" y="167.5" width="260" height="36" fill="#fff" stroke="#dde1e6"/>
  <g fill="none" stroke="#d3d8de" stroke-width="2.6"><circle cx="1247" cy="183.5" r="5.8"/><path d="M1251.5 188l5 5" stroke-width="3" stroke-linecap="round"/></g>
</svg>
<div class="t" style="left:1027px;top:113.5px;font-size:10.2px;color:#3c4556">Composants</div>
<div class="t" style="left:1027px;top:127.3px;font-size:16px;color:#3c4556">Tout</div>
<div class="t" style="left:1024.5px;top:178px;font-size:15.2px;color:#8792a0">Rechercher</div>
<div class="t" style="left:1011.5px;top:567.5px;font-size:15.3px;color:#1e96d4">Connecteurs</div>
<div class="t" style="left:1012px;top:742.5px;font-size:15.5px;color:#1e96d4">Logique</div>

<div class="cl" style="left:1015px;width:73.5px;top:265.0px">Transistor<br>pMOS pour…</div>
<div class="cl" style="left:1097px;width:74.7px;top:265.0px">Transistor<br>nMOS…</div>
<div class="cl" style="left:1180.3px;width:73.7px;top:265.0px">Transistor<br>pMOS…</div>
<div class="cl" style="left:1015px;width:73.5px;top:377.7px">TIP120<br></div>
<div class="cl" style="left:1097px;width:74.7px;top:377.7px">Relais<br>unipolaire…</div>
<div class="cl" style="left:1180.3px;width:73.7px;top:377.7px">Relais<br>bipolaire…</div>
<div class="cl" style="left:1015px;width:73.5px;top:489.0px">Régulateur 5<br>V [LM7805]</div>
<div class="cl" style="left:1097px;width:74.7px;top:489.0px">Régulateur<br>3,3 V…</div>
<div class="cl" style="left:1180.3px;width:73.7px;top:489.0px">Entraînement<br>de moteur à…</div>
<div class="cl" style="left:1015px;width:73.5px;top:664.3px">Embase à<br>8 broches</div>
<div class="cl" style="left:1097px;width:74.7px;top:664.3px">Connecteur A<br>USB standard</div>
<svg class="abs" style="left:1004px;top:97px" width="258" height="720" viewBox="1004 97 258 720"><rect x="1037.3" y="210" width="28.7" height="30" rx="2" fill="#3a3a3a"/><rect x="1039.5" y="213" width="24.2" height="25" fill="#2e2e2e"/>
<text x="1051.6" y="226.5" font-size="7" fill="#ddd" text-anchor="middle" font-family="Liberation Sans">PMOS</text>
<path d="M1043 240v2.5q-3 2-3 5v4.5M1051.6 240v12M1060 240v2.5q3 2 3 5v4.5" stroke="#555" stroke-width="1.7" fill="none"/>
<rect x="1119.8999999999999" y="207.5" width="28.4" height="12" fill="#c1c1c1"/>
<circle cx="1134.1" cy="212.5" r="2.5" fill="#f0f0f2"/>
<rect x="1119.9" y="219.5" width="28.4" height="25" rx="1.5" fill="#343434"/>
<rect x="1119.9" y="219.5" width="28.4" height="3.2" fill="#1f1f1f"/>
<text x="1134.1" y="233.5" font-size="7.5" fill="#eee" text-anchor="middle" font-family="Liberation Sans">NMOS</text>
<path d="M1124.6 244.5v7.5M1134.1 244.5v7.5M1143.6 244.5v7.5" stroke="#555" stroke-width="1.6"/>
<rect x="1202.1" y="207.0" width="28.4" height="12" fill="#c1c1c1"/>
<circle cx="1216.3" cy="212.0" r="2.5" fill="#f0f0f2"/>
<rect x="1202.1" y="219.5" width="28.4" height="24" rx="1.5" fill="#343434"/>
<rect x="1202.1" y="219.5" width="28.4" height="3.2" fill="#1f1f1f"/>
<text x="1216.3" y="233.2" font-size="7.5" fill="#eee" text-anchor="middle" font-family="Liberation Sans">PMOS</text>
<path d="M1206.8 243.5v7.2M1216.3 243.5v7.2M1225.8 243.5v7.2" stroke="#555" stroke-width="1.6"/>
<rect x="1037.1" y="321.2" width="28.4" height="12" fill="#c1c1c1"/>
<circle cx="1051.3" cy="326.2" r="2.5" fill="#f0f0f2"/>
<rect x="1037.1" y="333.2" width="28.4" height="23" rx="1.5" fill="#343434"/>
<rect x="1037.1" y="333.2" width="28.4" height="2.5" fill="#1f1f1f"/>
<text x="1051.3" y="345.7" font-size="7" fill="#eee" text-anchor="middle" font-family="Liberation Sans">TIP120</text>
<path d="M1041.8 356.2v7M1051.3 356.2v7M1060.8 356.2v7" stroke="#555" stroke-width="1.6"/>
<rect x="1037.2" y="433.6" width="28.4" height="12" fill="#c1c1c1"/>
<circle cx="1051.4" cy="438.6" r="2.5" fill="#f0f0f2"/>
<rect x="1037.2" y="445.6" width="28.4" height="23" rx="1.5" fill="#343434"/>
<rect x="1037.2" y="445.6" width="28.4" height="2.5" fill="#1f1f1f"/>
<text x="1051.4" y="458.1" font-size="7" fill="#eee" text-anchor="middle" font-family="Liberation Sans">5V</text>
<path d="M1041.9 468.6v7M1051.4 468.6v7M1060.9 468.6v7" stroke="#555" stroke-width="1.6"/>
<rect x="1120.0" y="433.6" width="28.4" height="12" fill="#c1c1c1"/>
<circle cx="1134.2" cy="438.6" r="2.5" fill="#f0f0f2"/>
<rect x="1120.0" y="445.6" width="28.4" height="23" rx="1.5" fill="#343434"/>
<rect x="1120.0" y="445.6" width="28.4" height="2.5" fill="#1f1f1f"/>
<text x="1134.2" y="458.1" font-size="7" fill="#eee" text-anchor="middle" font-family="Liberation Sans">3.3V</text>
<path d="M1124.7 468.6v7M1134.2 468.6v7M1143.7 468.6v7" stroke="#555" stroke-width="1.6"/>
<rect x="1105.2" y="321.8" width="59.3" height="39.2" rx="1" fill="#333"/>
<text x="1109.2" y="333.4" font-size="5.8" fill="#e6e6e6" font-weight="bold" font-family="Liberation Sans" textLength="19" lengthAdjust="spacingAndGlyphs">LU-5-R</text>
<text x="1109.2" y="340.8" font-size="4.8" fill="#d8d8d8" font-family="Liberation Sans" textLength="25.5" lengthAdjust="spacingAndGlyphs">3A/125V AC</text>
<text x="1109.2" y="346.3" font-size="4.8" fill="#d8d8d8" font-family="Liberation Sans" textLength="25.5" lengthAdjust="spacingAndGlyphs">3A/24V  DC</text>
<path d="M1143.5 341.2h14.2M1157.7 337v9.3M1144 337v3M1144 343v3M1148.2 338v7" stroke="#bbb" stroke-width="0.5" fill="none"/>
<rect x="1161.2" y="339" width="1.6" height="5.5" fill="#222"/>
<rect x="1185.4" y="326.3" width="63.2" height="30.7" rx="1" fill="#f4b93d"/>
<text x="1188.7" y="334.7" font-size="5.8" fill="#3a3a3a" font-weight="bold" font-family="Liberation Sans" textLength="33" lengthAdjust="spacingAndGlyphs">KS2E-M-DC5</text>
<text x="1188.7" y="341.8" font-size="4.6" fill="#444" font-family="Liberation Sans" textLength="12" lengthAdjust="spacingAndGlyphs">DC 5V</text>
<text x="1188.7" y="347.2" font-size="4.6" fill="#444" font-family="Liberation Sans" textLength="24.5" lengthAdjust="spacingAndGlyphs">1A/125V AC</text>
<text x="1188.7" y="352.5" font-size="4.6" fill="#444" font-family="Liberation Sans" textLength="24.5" lengthAdjust="spacingAndGlyphs">2A/30V DC</text>
<path d="M1223 348h13.5M1223 350h13.5M1223 345v8M1236.5 345v8M1242 344v9" stroke="#666" stroke-width="0.4" fill="none"/>
<g fill="#8a8a8a"><path d="M1187.9 446l2-3.5 2 3.5z"/><path d="M1187.9 462.7l2 3.5 2-3.5z"/><path d="M1195.5285714285715 446l2-3.5 2 3.5z"/><path d="M1195.5285714285715 462.7l2 3.5 2-3.5z"/><path d="M1203.1571428571428 446l2-3.5 2 3.5z"/><path d="M1203.1571428571428 462.7l2 3.5 2-3.5z"/><path d="M1210.7857142857144 446l2-3.5 2 3.5z"/><path d="M1210.7857142857144 462.7l2 3.5 2-3.5z"/><path d="M1218.4142857142858 446l2-3.5 2 3.5z"/><path d="M1218.4142857142858 462.7l2 3.5 2-3.5z"/><path d="M1226.0428571428572 446l2-3.5 2 3.5z"/><path d="M1226.0428571428572 462.7l2 3.5 2-3.5z"/><path d="M1233.6714285714286 446l2-3.5 2 3.5z"/><path d="M1233.6714285714286 462.7l2 3.5 2-3.5z"/><path d="M1241.3000000000002 446l2-3.5 2 3.5z"/><path d="M1241.3000000000002 462.7l2 3.5 2-3.5z"/></g><rect x="1185.9" y="446" width="61.4" height="16.7" rx="1.5" fill="#343434"/><path d="M1185.9 451.85a2.5 2.5 0 0 1 0 5z" fill="#222"/><circle cx="1189.9" cy="459.7" r="1" fill="#ddd"/><text x="1216.6000000000001" y="456.65000000000003" font-size="6" fill="#ddd" text-anchor="middle" font-family="Liberation Mono">L293D</text>
<g fill="#8a8a8a"><path d="M1023.3 795.3l2-3.5 2 3.5z"/><path d="M1023.3 814.0l2 3.5 2-3.5z"/><path d="M1032.05 795.3l2-3.5 2 3.5z"/><path d="M1032.05 814.0l2 3.5 2-3.5z"/><path d="M1040.8 795.3l2-3.5 2 3.5z"/><path d="M1040.8 814.0l2 3.5 2-3.5z"/><path d="M1049.55 795.3l2-3.5 2 3.5z"/><path d="M1049.55 814.0l2 3.5 2-3.5z"/><path d="M1058.3 795.3l2-3.5 2 3.5z"/><path d="M1058.3 814.0l2 3.5 2-3.5z"/><path d="M1067.05 795.3l2-3.5 2 3.5z"/><path d="M1067.05 814.0l2 3.5 2-3.5z"/><path d="M1075.8 795.3l2-3.5 2 3.5z"/><path d="M1075.8 814.0l2 3.5 2-3.5z"/></g><rect x="1021.3" y="795.3" width="60.5" height="18.7" rx="1.5" fill="#343434"/><path d="M1021.3 802.15a2.5 2.5 0 0 1 0 5z" fill="#222"/><circle cx="1025.3" cy="811.0" r="1" fill="#ddd"/><text x="1051.55" y="806.9499999999999" font-size="6.8" font-weight="bold" fill="#eee" text-anchor="middle" font-family="Liberation Mono">74HC00</text>
<g fill="#8a8a8a"><path d="M1105.5 795.3l2-3.5 2 3.5z"/><path d="M1105.5 814.0l2 3.5 2-3.5z"/><path d="M1114.25 795.3l2-3.5 2 3.5z"/><path d="M1114.25 814.0l2 3.5 2-3.5z"/><path d="M1123.0 795.3l2-3.5 2 3.5z"/><path d="M1123.0 814.0l2 3.5 2-3.5z"/><path d="M1131.75 795.3l2-3.5 2 3.5z"/><path d="M1131.75 814.0l2 3.5 2-3.5z"/><path d="M1140.5 795.3l2-3.5 2 3.5z"/><path d="M1140.5 814.0l2 3.5 2-3.5z"/><path d="M1149.25 795.3l2-3.5 2 3.5z"/><path d="M1149.25 814.0l2 3.5 2-3.5z"/><path d="M1158.0 795.3l2-3.5 2 3.5z"/><path d="M1158.0 814.0l2 3.5 2-3.5z"/></g><rect x="1103.5" y="795.3" width="60.5" height="18.7" rx="1.5" fill="#343434"/><path d="M1103.5 802.15a2.5 2.5 0 0 1 0 5z" fill="#222"/><circle cx="1107.5" cy="811.0" r="1" fill="#ddd"/><text x="1133.75" y="806.9499999999999" font-size="6.8" font-weight="bold" fill="#eee" text-anchor="middle" font-family="Liberation Mono">74HC02</text>
<g fill="#8a8a8a"><path d="M1188.0 795.3l2-3.5 2 3.5z"/><path d="M1188.0 814.0l2 3.5 2-3.5z"/><path d="M1196.75 795.3l2-3.5 2 3.5z"/><path d="M1196.75 814.0l2 3.5 2-3.5z"/><path d="M1205.5 795.3l2-3.5 2 3.5z"/><path d="M1205.5 814.0l2 3.5 2-3.5z"/><path d="M1214.25 795.3l2-3.5 2 3.5z"/><path d="M1214.25 814.0l2 3.5 2-3.5z"/><path d="M1223.0 795.3l2-3.5 2 3.5z"/><path d="M1223.0 814.0l2 3.5 2-3.5z"/><path d="M1231.75 795.3l2-3.5 2 3.5z"/><path d="M1231.75 814.0l2 3.5 2-3.5z"/><path d="M1240.5 795.3l2-3.5 2 3.5z"/><path d="M1240.5 814.0l2 3.5 2-3.5z"/></g><rect x="1186" y="795.3" width="60.5" height="18.7" rx="1.5" fill="#343434"/><path d="M1186 802.15a2.5 2.5 0 0 1 0 5z" fill="#222"/><circle cx="1190" cy="811.0" r="1" fill="#ddd"/><text x="1216.25" y="806.9499999999999" font-size="6.8" font-weight="bold" fill="#eee" text-anchor="middle" font-family="Liberation Mono">74HC08</text>
<rect x="1048.6" y="609.3" width="6.7" height="39.3" rx="1" fill="#2e2e2e"/><rect x="1051.3" y="611.5" width="1.4" height="1.4" fill="#777"/><rect x="1051.3" y="616.4" width="1.4" height="1.4" fill="#777"/><rect x="1051.3" y="621.3" width="1.4" height="1.4" fill="#777"/><rect x="1051.3" y="626.2" width="1.4" height="1.4" fill="#777"/><rect x="1051.3" y="631.1" width="1.4" height="1.4" fill="#777"/><rect x="1051.3" y="636.0" width="1.4" height="1.4" fill="#777"/><rect x="1051.3" y="640.9" width="1.4" height="1.4" fill="#777"/><rect x="1051.3" y="645.8" width="1.4" height="1.4" fill="#777"/>
<rect x="1103.6" y="621.5" width="13.5" height="13.5" fill="#c8c8c8"/><rect x="1106" y="624.5" width="2" height="2" fill="#555"/><rect x="1106" y="629.5" width="2" height="2" fill="#555"/>
<path d="M1117 620h22q4 0 6 3h6q3 1 3 3v3q0 2-3 3h-6q-2 3-6 3h-22z" fill="#333"/>
<path d="M1154 626.5h5M1154 628.5h7M1154 630.5h5" stroke="#444" stroke-width="1"/>
<path d="M1160 625l4 3.5-4 3.5" stroke="#999" stroke-width="0.7" fill="none"/>
<rect x="1005" y="157" width="257" height="56.8" fill="#eff0f2"/>
<rect x="1015.5" y="167.5" width="260" height="36" fill="#fff" stroke="#dde1e6"/>
<g fill="none" stroke="#d3d8de" stroke-width="2.6"><circle cx="1247" cy="183.5" r="5.8"/><path d="M1251.5 188l5 5" stroke-width="3" stroke-linecap="round"/></g>
</svg>
<div class="t" style="left:1024.5px;top:178px;font-size:15.2px;color:#8792a0">Rechercher</div>


<!-- INSPECTOR -->
<div class="abs" style="left:740px;top:106px;width:256px;height:81.5px;background:#0696d7;border-radius:3px"></div>
<div class="abs" style="left:742px;top:145.5px;width:252px;height:40px;background:#fff"></div>
<div class="abs" style="left:746px;top:150.5px;width:248px;height:31.5px;background:#0696d7;border-radius:3px 0 0 3px"></div>
<div class="abs" style="left:794px;top:152px;width:200px;height:28.5px;background:#fff"></div>
<svg class="abs" style="left:960px;top:110px" width="26" height="26"><circle cx="13" cy="12.3" r="9.3" fill="none" stroke="#cfe9f6" stroke-width="1.6"/>
<text x="13" y="16.7" font-family="Liberation Sans" font-weight="bold" font-size="12" fill="#fff" text-anchor="middle">?</text></svg>
<div class="t" style="left:749.5px;top:116.5px;font-size:14.2px;color:#fff">Capteur de température [TMP…</div>
<div class="t" style="left:755px;top:158.5px;font-size:14.5px;color:#fff;font-weight:bold;letter-spacing:-0.2px">Nom</div>
<div class="t" style="left:802.5px;top:158.5px;font-size:14px;color:#1d90cf">temp</div>
<!-- collapse tab -->
<div class="abs" style="left:995px;top:472px;width:12px;height:44.5px;background:#f0f1f3;border:1px solid #dde2e8;border-right:none"></div>
<svg class="abs" style="left:995px;top:472px" width="14" height="46"><path d="M4.4 11.3L10.9 22.2L4.6 32.3" fill="none" stroke="#000" stroke-width="2.1"/></svg>

</body></html>
